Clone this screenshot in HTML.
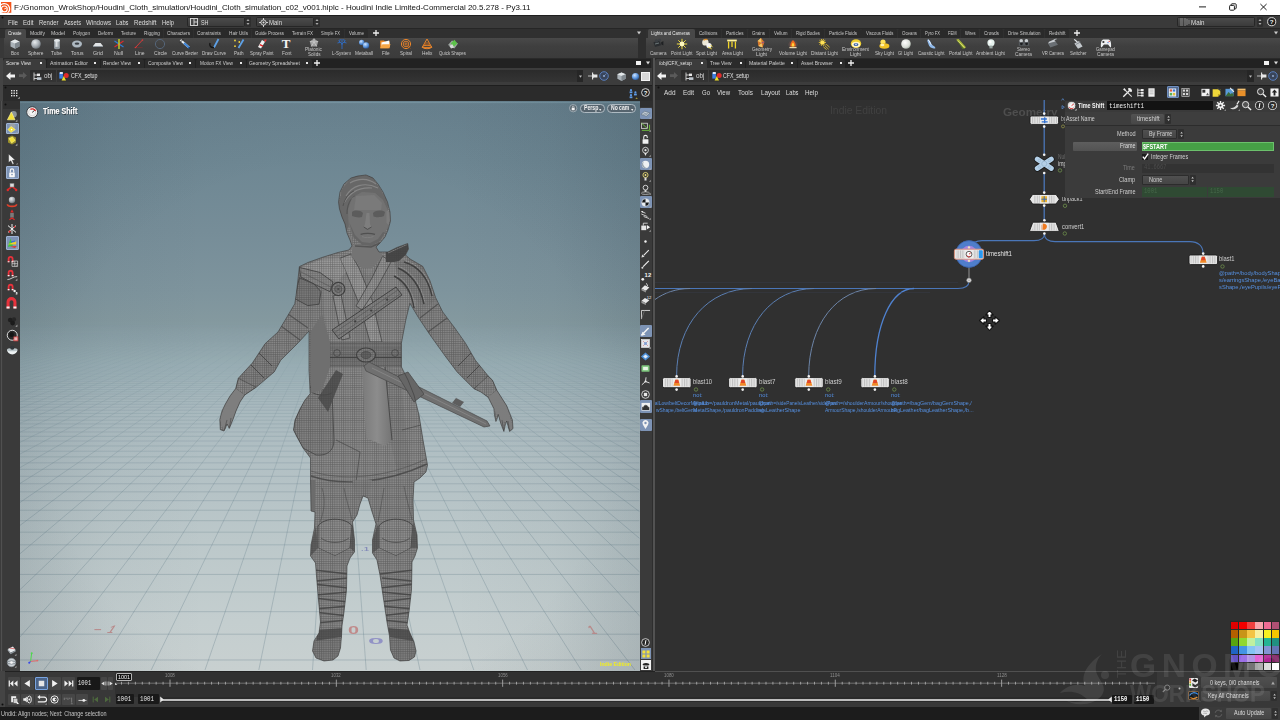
<!DOCTYPE html>
<html lang="en"><head><meta charset="utf-8"><title>Houdini</title><style>
*{box-sizing:border-box;margin:0;padding:0}
html,body{width:1280px;height:720px;overflow:hidden;background:#3a3a3a}
body{position:relative;font-family:"Liberation Sans",sans-serif;color:#d6d6d6;font-size:8px;line-height:1}
.a{position:absolute}
.t{position:absolute;white-space:nowrap;line-height:1}
.c{position:absolute;white-space:nowrap;line-height:1;transform:translateX(-50%);text-align:center}
svg{position:absolute;overflow:visible}
</style></head><body>
<div class="a" style="left:0px;top:0px;width:1280px;height:15px;background:#ffffff;"></div>
<svg style="left:0;top:0" width="13" height="15" viewBox="0 0 13 15"><defs><clipPath id="clogo"><rect x="1" y="2" width="10.3" height="10.8"/></clipPath></defs><rect x="1" y="2" width="10.3" height="10.8" fill="#f2541a"/><g clip-path="url(#clogo)" fill="none" stroke="#fff"><circle cx="4.3" cy="8.9" r="5.3" stroke-width="1.3"/><circle cx="4.3" cy="8.9" r="2.9" stroke-width="1.2"/><path d="M4.3 8.9L6 8.2" stroke-width="0.9"/><path d="M-2 15L3 10.5" stroke-width="2.4"/></g></svg>
<div class="t" style="left:13.6px;top:4px;font-size:8px;color:#101010;transform:scaleX(0.9982);transform-origin:0 0;">F:/Gnomon_WrokShop/Houdini_Cloth_simulation/Houdini_Cloth_simulation_c02_v001.hiplc - Houdini Indie Limited-Commercial 20.5.278 - Py3.11</div>
<svg style="left:1195px;top:0" width="85" height="15" viewBox="0 0 85 15"><path d="M4 6.9h7" stroke="#1e1e1e" stroke-width="1"/><rect x="34.6" y="5.4" width="4.8" height="4.8" rx="0.8" fill="none" stroke="#1e1e1e" stroke-width="1"/><path d="M36.2 5.2v-0.6a0.8 0.8 0 0 1 0.8 -0.8h3.4a0.8 0.8 0 0 1 0.8 0.8v3.4a0.8 0.8 0 0 1 -0.8 0.8h-0.8" fill="none" stroke="#1e1e1e" stroke-width="1"/><path d="M65.4 4l6.2 6M71.6 4l-6.2 6" stroke="#1e1e1e" stroke-width="1"/></svg>
<div class="a" style="left:0px;top:15px;width:1280px;height:14px;background:#3a3a3a;"></div>
<div class="a" style="left:0px;top:15px;width:1280px;height:1px;background:#1f1f1f;"></div>
<div class="a" style="left:0px;top:16px;width:4px;height:42px;background:#383838;"></div>
<svg style="left:0.6px;top:16.4px" width="3" height="18"><circle cx="1.5" cy="1.5" r="1" fill="#0e0e0e"/><circle cx="1.5" cy="14.4" r="1" fill="#0e0e0e"/></svg>
<div class="t" style="left:8px;top:18.6px;font-size:7.0px;color:#dedede;transform:scaleX(0.8865);transform-origin:0 0;">File</div>
<div class="t" style="left:23px;top:18.6px;font-size:7.0px;color:#dedede;transform:scaleX(0.8705);transform-origin:0 0;">Edit</div>
<div class="t" style="left:39px;top:18.6px;font-size:7.0px;color:#dedede;transform:scaleX(0.8493);transform-origin:0 0;">Render</div>
<div class="t" style="left:64px;top:18.6px;font-size:7.0px;color:#dedede;transform:scaleX(0.8092);transform-origin:0 0;">Assets</div>
<div class="t" style="left:86px;top:18.6px;font-size:7.0px;color:#dedede;transform:scaleX(0.8804);transform-origin:0 0;">Windows</div>
<div class="t" style="left:116px;top:18.6px;font-size:7.0px;color:#dedede;transform:scaleX(0.8235);transform-origin:0 0;">Labs</div>
<div class="t" style="left:134px;top:18.6px;font-size:7.0px;color:#dedede;transform:scaleX(0.8762);transform-origin:0 0;">Redshift</div>
<div class="t" style="left:162px;top:18.6px;font-size:7.0px;color:#dedede;transform:scaleX(0.8335);transform-origin:0 0;">Help</div>
<div class="a" style="left:187px;top:17px;width:57.5px;height:10.4px;background:linear-gradient(#4b4b4b,#3b3b3b);border-radius:1.5px;border:0.6px solid #262626"></div>
<div class="a" style="left:245px;top:17px;width:6px;height:10.4px;background:#2e2e2e;border-radius:1px"></div>
<svg style="left:190px;top:18px" width="8" height="8" viewBox="0 0 8 8"><rect x="0.5" y="0.5" width="7" height="7" fill="none" stroke="#ddd" stroke-width="0.9"/><path d="M4 0.5v7M4 4h3.5" stroke="#ddd" stroke-width="0.9"/></svg>
<div class="t" style="left:200.5px;top:18.6px;font-size:7.0px;color:#dedede;transform:scaleX(0.7712);transform-origin:0 0;">SH</div>
<svg style="left:246.2px;top:18.2px" width="4" height="8" viewBox="0 0 4 8"><path d="M0.5 3L2 1L3.5 3zM0.5 5L2 7L3.5 5z" fill="#aaa"/></svg>
<div class="a" style="left:256px;top:17px;width:57.5px;height:10.4px;background:linear-gradient(#4b4b4b,#3b3b3b);border-radius:1.5px;border:0.6px solid #262626"></div>
<div class="a" style="left:314px;top:17px;width:6px;height:10.4px;background:#2e2e2e;border-radius:1px"></div>
<svg style="left:258.5px;top:17.5px" width="9" height="9" viewBox="0 0 9 9"><circle cx="4.5" cy="4.5" r="2.6" fill="none" stroke="#ddd" stroke-width="0.9"/><circle cx="4.5" cy="4.5" r="1" fill="#ddd"/><path d="M4.5 0v2M4.5 7v2M0 4.5h2M7 4.5h2" stroke="#ddd" stroke-width="0.9"/></svg>
<div class="t" style="left:269px;top:18.6px;font-size:7.0px;color:#dedede;transform:scaleX(0.8568);transform-origin:0 0;">Main</div>
<svg style="left:315.2px;top:18.2px" width="4" height="8" viewBox="0 0 4 8"><path d="M0.5 3L2 1L3.5 3zM0.5 5L2 7L3.5 5z" fill="#aaa"/></svg>
<div class="a" style="left:1177px;top:17px;width:78px;height:10.4px;background:linear-gradient(#4b4b4b,#3b3b3b);border-radius:1.5px;border:0.6px solid #262626"></div>
<div class="a" style="left:1256.5px;top:17px;width:6px;height:10.4px;background:#2e2e2e;border-radius:1px"></div>
<svg style="left:1179.5px;top:18px" width="10" height="8" viewBox="0 0 10 8"><path d="M0 1h3M0 3h3M0 5h3M0 7h3M5 0v8M7 1v6M9 2v4" stroke="#999" stroke-width="0.8"/></svg>
<div class="t" style="left:1191px;top:18.6px;font-size:7.0px;color:#dedede;transform:scaleX(0.8897);transform-origin:0 0;">Main</div>
<svg style="left:1258px;top:18px" width="4" height="8" viewBox="0 0 4 8"><path d="M0.5 3L2 1L3.5 3zM0.5 5L2 7L3.5 5z" fill="#aaa"/></svg>
<svg style="left:1267px;top:17.2px" width="9.4" height="9.4" viewBox="0 0 9 9"><circle cx="4.5" cy="4.5" r="3.9" fill="#1e1e1e" stroke="#e4e4e4" stroke-width="0.9"/><text x="4.5" y="6.7" font-size="6" font-weight="bold" text-anchor="middle" fill="#fff" font-family="Liberation Sans,sans-serif">?</text></svg>
<div class="a" style="left:0px;top:29px;width:1280px;height:9px;background:#303030;"></div>
<div class="a" style="left:0px;top:28px;width:1280px;height:1px;background:#262626;"></div>
<div class="a" style="left:5px;top:29px;width:20.75px;height:9px;background:#484848;border-radius:2px 2px 0 0"></div>
<div class="t" style="left:8px;top:31.2px;font-size:5.3px;color:#ececec;transform:scaleX(0.8486);transform-origin:0 0;">Create</div>
<div class="a" style="left:26.15px;top:29.4px;width:21.45px;height:8.6px;background:#2a2a2a;border-radius:1.5px 1.5px 0 0"></div>
<div class="t" style="left:30px;top:31.2px;font-size:5.3px;color:#c8c8c8;transform:scaleX(0.9609);transform-origin:0 0;">Modify</div>
<div class="a" style="left:48.4px;top:29.4px;width:20.2px;height:8.6px;background:#2a2a2a;border-radius:1.5px 1.5px 0 0"></div>
<div class="t" style="left:51px;top:31.2px;font-size:5.3px;color:#c8c8c8;transform:scaleX(0.9698);transform-origin:0 0;">Model</div>
<div class="a" style="left:69.4px;top:29.4px;width:24.2px;height:8.6px;background:#2a2a2a;border-radius:1.5px 1.5px 0 0"></div>
<div class="t" style="left:73px;top:31.2px;font-size:5.3px;color:#c8c8c8;transform:scaleX(0.8876);transform-origin:0 0;">Polygon</div>
<div class="a" style="left:94.4px;top:29.4px;width:22.2px;height:8.6px;background:#2a2a2a;border-radius:1.5px 1.5px 0 0"></div>
<div class="t" style="left:98px;top:31.2px;font-size:5.3px;color:#c8c8c8;transform:scaleX(0.8633);transform-origin:0 0;">Deform</div>
<div class="a" style="left:117.4px;top:29.4px;width:22.2px;height:8.6px;background:#2a2a2a;border-radius:1.5px 1.5px 0 0"></div>
<div class="t" style="left:121px;top:31.2px;font-size:5.3px;color:#c8c8c8;transform:scaleX(0.8630);transform-origin:0 0;">Texture</div>
<div class="a" style="left:140.4px;top:29.4px;width:22.7px;height:8.6px;background:#2a2a2a;border-radius:1.5px 1.5px 0 0"></div>
<div class="t" style="left:144px;top:31.2px;font-size:5.3px;color:#c8c8c8;transform:scaleX(0.8902);transform-origin:0 0;">Rigging</div>
<div class="a" style="left:163.9px;top:29.4px;width:29.2px;height:8.6px;background:#2a2a2a;border-radius:1.5px 1.5px 0 0"></div>
<div class="t" style="left:167px;top:31.2px;font-size:5.3px;color:#c8c8c8;transform:scaleX(0.8873);transform-origin:0 0;">Characters</div>
<div class="a" style="left:193.9px;top:29.4px;width:30.7px;height:8.6px;background:#2a2a2a;border-radius:1.5px 1.5px 0 0"></div>
<div class="t" style="left:197px;top:31.2px;font-size:5.3px;color:#c8c8c8;transform:scaleX(0.8953);transform-origin:0 0;">Constraints</div>
<div class="a" style="left:225.4px;top:29.4px;width:25.7px;height:8.6px;background:#2a2a2a;border-radius:1.5px 1.5px 0 0"></div>
<div class="t" style="left:229px;top:31.2px;font-size:5.3px;color:#c8c8c8;transform:scaleX(0.8839);transform-origin:0 0;">Hair Utils</div>
<div class="a" style="left:251.9px;top:29.4px;width:35.7px;height:8.6px;background:#2a2a2a;border-radius:1.5px 1.5px 0 0"></div>
<div class="t" style="left:255px;top:31.2px;font-size:5.3px;color:#c8c8c8;transform:scaleX(0.8343);transform-origin:0 0;">Guide Process</div>
<div class="a" style="left:288.4px;top:29.4px;width:28.2px;height:8.6px;background:#2a2a2a;border-radius:1.5px 1.5px 0 0"></div>
<div class="t" style="left:292px;top:31.2px;font-size:5.3px;color:#c8c8c8;transform:scaleX(0.8590);transform-origin:0 0;">Terrain FX</div>
<div class="a" style="left:317.4px;top:29.4px;width:26.7px;height:8.6px;background:#2a2a2a;border-radius:1.5px 1.5px 0 0"></div>
<div class="t" style="left:321px;top:31.2px;font-size:5.3px;color:#c8c8c8;transform:scaleX(0.7772);transform-origin:0 0;">Simple FX</div>
<div class="a" style="left:344.9px;top:29.4px;width:23.2px;height:8.6px;background:#2a2a2a;border-radius:1.5px 1.5px 0 0"></div>
<div class="t" style="left:349px;top:31.2px;font-size:5.3px;color:#c8c8c8;transform:scaleX(0.8485);transform-origin:0 0;">Volume</div>
<svg style="left:372.5px;top:30px" width="6" height="6" viewBox="0 0 6 6"><path d="M3 0v6M0 3h6" stroke="#eee" stroke-width="1.3"/></svg>
<div class="a" style="left:648px;top:29px;width:46.5px;height:9px;background:#484848;border-radius:2px 2px 0 0"></div>
<div class="t" style="left:651px;top:31.2px;font-size:5.3px;color:#ececec;transform:scaleX(0.8222);transform-origin:0 0;">Lights and Cameras</div>
<div class="a" style="left:694.9px;top:29.4px;width:26.45px;height:8.6px;background:#2a2a2a;border-radius:1.5px 1.5px 0 0"></div>
<div class="t" style="left:699px;top:31.2px;font-size:5.3px;color:#c8c8c8;transform:scaleX(0.8157);transform-origin:0 0;">Collisions</div>
<div class="a" style="left:722.15px;top:29.4px;width:25.2px;height:8.6px;background:#2a2a2a;border-radius:1.5px 1.5px 0 0"></div>
<div class="t" style="left:726px;top:31.2px;font-size:5.3px;color:#c8c8c8;transform:scaleX(0.8611);transform-origin:0 0;">Particles</div>
<div class="a" style="left:748.15px;top:29.4px;width:20.7px;height:8.6px;background:#2a2a2a;border-radius:1.5px 1.5px 0 0"></div>
<div class="t" style="left:752px;top:31.2px;font-size:5.3px;color:#c8c8c8;transform:scaleX(0.8328);transform-origin:0 0;">Grains</div>
<div class="a" style="left:769.65px;top:29.4px;width:21.45px;height:8.6px;background:#2a2a2a;border-radius:1.5px 1.5px 0 0"></div>
<div class="t" style="left:773.5px;top:31.2px;font-size:5.3px;color:#c8c8c8;transform:scaleX(0.8486);transform-origin:0 0;">Vellum</div>
<div class="a" style="left:791.9px;top:29.4px;width:31.95px;height:8.6px;background:#2a2a2a;border-radius:1.5px 1.5px 0 0"></div>
<div class="t" style="left:796px;top:31.2px;font-size:5.3px;color:#c8c8c8;transform:scaleX(0.8065);transform-origin:0 0;">Rigid Bodies</div>
<div class="a" style="left:824.65px;top:29.4px;width:35.95px;height:8.6px;background:#2a2a2a;border-radius:1.5px 1.5px 0 0"></div>
<div class="t" style="left:828.5px;top:31.2px;font-size:5.3px;color:#c8c8c8;transform:scaleX(0.8412);transform-origin:0 0;">Particle Fluids</div>
<div class="a" style="left:861.4px;top:29.4px;width:35.45px;height:8.6px;background:#2a2a2a;border-radius:1.5px 1.5px 0 0"></div>
<div class="t" style="left:865.5px;top:31.2px;font-size:5.3px;color:#c8c8c8;transform:scaleX(0.8071);transform-origin:0 0;">Viscous Fluids</div>
<div class="a" style="left:897.65px;top:29.4px;width:22.7px;height:8.6px;background:#2a2a2a;border-radius:1.5px 1.5px 0 0"></div>
<div class="t" style="left:901.5px;top:31.2px;font-size:5.3px;color:#c8c8c8;transform:scaleX(0.8212);transform-origin:0 0;">Oceans</div>
<div class="a" style="left:921.15px;top:29.4px;width:22.45px;height:8.6px;background:#2a2a2a;border-radius:1.5px 1.5px 0 0"></div>
<div class="t" style="left:925px;top:31.2px;font-size:5.3px;color:#c8c8c8;transform:scaleX(0.7836);transform-origin:0 0;">Pyro FX</div>
<div class="a" style="left:944.4px;top:29.4px;width:15.95px;height:8.6px;background:#2a2a2a;border-radius:1.5px 1.5px 0 0"></div>
<div class="t" style="left:948px;top:31.2px;font-size:5.3px;color:#c8c8c8;transform:scaleX(0.7597);transform-origin:0 0;">FEM</div>
<div class="a" style="left:961.15px;top:29.4px;width:18.2px;height:8.6px;background:#2a2a2a;border-radius:1.5px 1.5px 0 0"></div>
<div class="t" style="left:965px;top:31.2px;font-size:5.3px;color:#c8c8c8;transform:scaleX(0.7753);transform-origin:0 0;">Wires</div>
<div class="a" style="left:980.15px;top:29.4px;width:22.7px;height:8.6px;background:#2a2a2a;border-radius:1.5px 1.5px 0 0"></div>
<div class="t" style="left:984px;top:31.2px;font-size:5.3px;color:#c8c8c8;transform:scaleX(0.8349);transform-origin:0 0;">Crowds</div>
<div class="a" style="left:1003.65px;top:29.4px;width:40.2px;height:8.6px;background:#2a2a2a;border-radius:1.5px 1.5px 0 0"></div>
<div class="t" style="left:1007.5px;top:31.2px;font-size:5.3px;color:#c8c8c8;transform:scaleX(0.8423);transform-origin:0 0;">Drive Simulation</div>
<div class="a" style="left:1044.65px;top:29.4px;width:24.45px;height:8.6px;background:#2a2a2a;border-radius:1.5px 1.5px 0 0"></div>
<div class="t" style="left:1048.5px;top:31.2px;font-size:5.3px;color:#c8c8c8;transform:scaleX(0.8486);transform-origin:0 0;">Redshift</div>
<svg style="left:1073.5px;top:30px" width="6" height="6" viewBox="0 0 6 6"><path d="M3 0v6M0 3h6" stroke="#eee" stroke-width="1.3"/></svg>
<div class="a" style="left:638px;top:29px;width:8px;height:42px;background:#2e2e2e;"></div>
<svg style="left:637px;top:31px" width="4" height="4" viewBox="0 0 4 4"><path d="M0 0.5h4L2 3.5z" fill="#ccc"/></svg>
<svg style="left:1274px;top:31px" width="4" height="4" viewBox="0 0 4 4"><path d="M0 0.5h4L2 3.5z" fill="#ccc"/></svg>
<div class="a" style="left:4px;top:38px;width:634px;height:19.5px;background:linear-gradient(#494949,#3f3f3f 40%,#3b3b3b);"></div>
<div class="a" style="left:646px;top:38px;width:634px;height:19.5px;background:linear-gradient(#494949,#3f3f3f 40%,#3b3b3b);"></div>
<svg width="0" height="0" style="left:0;top:0"><defs><radialGradient id="gsph" cx="0.38" cy="0.32" r="0.7"><stop offset="0" stop-color="#e8ecef"/><stop offset="0.6" stop-color="#a6adb3"/><stop offset="1" stop-color="#6d747a"/></radialGradient><radialGradient id="gblu" cx="0.38" cy="0.32" r="0.7"><stop offset="0" stop-color="#cfe4ff"/><stop offset="0.6" stop-color="#5f97dc"/><stop offset="1" stop-color="#2d5a9c"/></radialGradient><radialGradient id="gwht" cx="0.4" cy="0.35" r="0.7"><stop offset="0" stop-color="#ffffff"/><stop offset="0.7" stop-color="#d8ddd6"/><stop offset="1" stop-color="#9aa39a"/></radialGradient><linearGradient id="gcyl" x1="0" x2="1"><stop offset="0" stop-color="#7d858b"/><stop offset="0.4" stop-color="#dfe3e6"/><stop offset="1" stop-color="#7d858b"/></linearGradient></defs></svg>
<svg style="left:9.0px;top:38.0px" width="12" height="12" viewBox="-6 -6 12 12"><path d="M-4.5 -2.5L0 -4.5L4.5 -2.5V2.5L0 4.8L-4.5 2.5z" fill="#aab2b8"/><path d="M-4.5 -2.5L0 -4.5L4.5 -2.5L0 -0.6z" fill="#e4e8ea"/><path d="M0 -0.6L4.5 -2.5V2.5L0 4.8z" fill="#80888e"/></svg>
<div class="t" style="left:11px;top:50.9px;font-size:5.2px;color:#c9c9c9;transform:scaleX(0.8928);transform-origin:0 0;">Box</div>
<svg style="left:29.5px;top:38.0px" width="12" height="12" viewBox="-6 -6 12 12"><circle r="4.8" fill="url(#gsph)"/></svg>
<div class="t" style="left:28px;top:50.9px;font-size:5.2px;color:#c9c9c9;transform:scaleX(0.9243);transform-origin:0 0;">Sphere</div>
<svg style="left:50.5px;top:38.0px" width="12" height="12" viewBox="-6 -6 12 12"><rect x="-3" y="-3.6" width="6" height="7.6" fill="url(#gcyl)"/><ellipse cy="4" rx="3" ry="1.2" fill="#8e969c"/><ellipse cy="-3.6" rx="3" ry="1.3" fill="#e3e7ea"/></svg>
<div class="t" style="left:51px;top:50.9px;font-size:5.2px;color:#c9c9c9;transform:scaleX(0.9434);transform-origin:0 0;">Tube</div>
<svg style="left:71.0px;top:38.0px" width="12" height="12" viewBox="-6 -6 12 12"><ellipse rx="5" ry="3.4" fill="#aeb9c2"/><ellipse cy="-0.3" rx="2.3" ry="1.1" fill="#3a3f44"/><path d="M-5 0.4A5 3.2 0 0 0 5 0.4A5 3.6 0 0 1 -5 0.4z" fill="#6e7a85"/></svg>
<div class="t" style="left:71px;top:50.9px;font-size:5.2px;color:#c9c9c9;transform:scaleX(0.9830);transform-origin:0 0;">Torus</div>
<svg style="left:92.0px;top:38.0px" width="12" height="12" viewBox="-6 -6 12 12"><path d="M-2.6 -1L2.6 -1L5 2L-5 2z" fill="#e1e4e6"/><path d="M-5 2H5V3H-5z" fill="#8b9298"/></svg>
<div class="t" style="left:93px;top:50.9px;font-size:5.2px;color:#c9c9c9;transform:scaleX(1.0179);transform-origin:0 0;">Grid</div>
<svg style="left:112.5px;top:38.0px" width="12" height="12" viewBox="-6 -6 12 12"><path d="M-4.5 -3L4.5 3" stroke="#2e7fd6" stroke-width="1.2"/><path d="M-4.5 3L4.5 -3" stroke="#e02b2b" stroke-width="1.2"/><path d="M0 -5V5" stroke="#c8d628" stroke-width="1.4"/></svg>
<div class="t" style="left:114px;top:50.9px;font-size:5.2px;color:#c9c9c9;transform:scaleX(1.0047);transform-origin:0 0;">Null</div>
<svg style="left:133.0px;top:38.0px" width="12" height="12" viewBox="-6 -6 12 12"><path d="M-3.5 3.5L3.5 -4" stroke="#d83a3a" stroke-width="1"/><path d="M-4.5 3.6H3.5" stroke="#8a3030" stroke-width="0.6"/><circle cx="-3.5" cy="3.5" r="0.8" fill="#d83a3a"/><circle cx="3.5" cy="-4" r="0.8" fill="#d83a3a"/></svg>
<div class="t" style="left:134.5px;top:50.9px;font-size:5.2px;color:#c9c9c9;transform:scaleX(0.9663);transform-origin:0 0;">Line</div>
<svg style="left:154.0px;top:38.0px" width="12" height="12" viewBox="-6 -6 12 12"><circle r="4.6" fill="none" stroke="#556579" stroke-width="1"/></svg>
<div class="t" style="left:153.5px;top:50.9px;font-size:5.2px;color:#c9c9c9;transform:scaleX(0.9782);transform-origin:0 0;">Circle</div>
<svg style="left:179.0px;top:38.0px" width="12" height="12" viewBox="-6 -6 12 12"><path d="M-4.5 -4L4 3.5" stroke="#e9eef3" stroke-width="2.2"/><path d="M-1 -1L4.2 3.8" stroke="#3f86d8" stroke-width="2"/><path d="M-5 -1.5L-1.5 -5" stroke="#222" stroke-width="0.8"/><circle cx="4.3" cy="3.9" r="0.9" fill="#1c3f6e"/></svg>
<div class="t" style="left:172px;top:50.9px;font-size:5.2px;color:#c9c9c9;transform:scaleX(0.8651);transform-origin:0 0;">Curve Bezier</div>
<svg style="left:207.5px;top:38.0px" width="12" height="12" viewBox="-6 -6 12 12"><path d="M4.5 -5L0 3.5" stroke="#5da0e6" stroke-width="1.8"/><path d="M-4 -1C-5 2 -3 4 0 3.5" stroke="#151515" stroke-width="1.4" fill="none"/></svg>
<div class="t" style="left:201.5px;top:50.9px;font-size:5.2px;color:#c9c9c9;transform:scaleX(0.8743);transform-origin:0 0;">Draw Curve</div>
<svg style="left:232.5px;top:38.0px" width="12" height="12" viewBox="-6 -6 12 12"><path d="M4.5 -4.5L-0.5 4" stroke="#5da0e6" stroke-width="1.8"/><circle cx="-4" cy="-3.5" r="0.9" fill="#f2d53a"/><circle cx="0.3" cy="-2" r="0.9" fill="#f2d53a"/><circle cx="-4" cy="2.2" r="0.9" fill="#f2d53a"/></svg>
<div class="t" style="left:234px;top:50.9px;font-size:5.2px;color:#c9c9c9;transform:scaleX(0.8881);transform-origin:0 0;">Path</div>
<svg style="left:255.5px;top:38.0px" width="12" height="12" viewBox="-6 -6 12 12"><path d="M-4 3L0 -4L3 -2.3L-1 4.6z" fill="#f1f1f1"/><path d="M-2.2 0.6L1 2.2" stroke="#d22" stroke-width="1.4"/><path d="M1.5 -4.2L4.8 -4.6L3.6 -1.8z" fill="#e03a3a"/></svg>
<div class="t" style="left:250px;top:50.9px;font-size:5.2px;color:#c9c9c9;transform:scaleX(0.8742);transform-origin:0 0;">Spray Paint</div>
<svg style="left:280.0px;top:38.0px" width="12" height="12" viewBox="-6 -6 12 12"><text x="0" y="4.4" text-anchor="middle" font-family="Liberation Serif,serif" font-weight="bold" font-size="13" fill="#f4f4f4">T</text></svg>
<div class="t" style="left:281.5px;top:50.9px;font-size:5.2px;color:#c9c9c9;transform:scaleX(0.9130);transform-origin:0 0;">Font</div>
<svg style="left:307.5px;top:36.5px" width="12" height="12" viewBox="-6 -6 12 12"><path d="M0 -4.6L4.2 -1.6L2.8 3.6H-2.8L-4.2 -1.6z" fill="#a0a0a0"/><path d="M0 -4.6L0 -1L-4.2 -1.6M0 -1L4.2 -1.6M0 -1L-2.8 3.6M0 -1L2.8 3.6" stroke="#d6d6d6" stroke-width="0.6" fill="none"/></svg>
<div class="t" style="left:305px;top:47.2px;font-size:5.2px;color:#c9c9c9;transform:scaleX(0.9189);transform-origin:0 0;">Platonic</div>
<div class="t" style="left:307.5px;top:52.2px;font-size:5.2px;color:#c9c9c9;transform:scaleX(0.8826);transform-origin:0 0;">Solids</div>
<svg style="left:335.5px;top:38.0px" width="12" height="12" viewBox="-6 -6 12 12"><path d="M0 5V0M0 0L-3.5 -3.5M0 0L3.5 -3.5M0 1L0 -5M-1.8 -1.8L-4.5 -1M1.8 -1.8L4.5 -1M-2.6 -2.6L-1.6 -5M2.6 -2.6L1.6 -5" stroke="#2f6cc4" stroke-width="0.9" fill="none"/></svg>
<div class="t" style="left:332px;top:50.9px;font-size:5.2px;color:#c9c9c9;transform:scaleX(0.8652);transform-origin:0 0;">L-System</div>
<svg style="left:358.0px;top:38.0px" width="12" height="12" viewBox="-6 -6 12 12"><circle cx="-2.3" cy="-1.6" r="2.7" fill="url(#gblu)"/><circle cx="2" cy="1.4" r="3.2" fill="url(#gblu)"/></svg>
<div class="t" style="left:355px;top:50.9px;font-size:5.2px;color:#c9c9c9;transform:scaleX(0.9158);transform-origin:0 0;">Metaball</div>
<svg style="left:379.0px;top:38.0px" width="12" height="12" viewBox="-6 -6 12 12"><path d="M-4.8 -3.6H-1L0 -2.4H4.8V4.2H-4.8z" fill="#f08a24"/><path d="M-3.6 -1.6L4.2 -3.4L4.6 2.6L-3.2 3.4z" fill="#fbfbfb"/><path d="M-4.8 4.2L-2.6 0.2H5.6L3.6 4.2z" fill="#f6a646"/></svg>
<div class="t" style="left:381.5px;top:50.9px;font-size:5.2px;color:#c9c9c9;transform:scaleX(0.8951);transform-origin:0 0;">File</div>
<svg style="left:400.0px;top:38.0px" width="12" height="12" viewBox="-6 -6 12 12"><circle r="4.6" fill="none" stroke="#e8852c" stroke-width="1"/><circle r="2.8" fill="none" stroke="#e8852c" stroke-width="0.9"/><circle r="1.1" fill="none" stroke="#e8852c" stroke-width="0.8"/><path d="M0 0L4.5 4.5" stroke="#a7551a" stroke-width="0.8"/></svg>
<div class="t" style="left:400px;top:50.9px;font-size:5.2px;color:#c9c9c9;transform:scaleX(0.9026);transform-origin:0 0;">Spiral</div>
<svg style="left:420.5px;top:38.0px" width="12" height="12" viewBox="-6 -6 12 12"><path d="M0 -5L4.8 3.4H-4.8z" fill="none" stroke="#e8852c" stroke-width="1"/><ellipse cy="3" rx="4.6" ry="1.7" fill="none" stroke="#e8852c" stroke-width="1"/><ellipse cy="0" rx="2.7" ry="1.1" fill="none" stroke="#c96c1e" stroke-width="0.9"/></svg>
<div class="t" style="left:421.5px;top:50.9px;font-size:5.2px;color:#c9c9c9;transform:scaleX(0.9084);transform-origin:0 0;">Helix</div>
<svg style="left:446.5px;top:38.0px" width="12" height="12" viewBox="-6 -6 12 12"><path d="M-5 1L-1 -3.6L5 -0.6L1.4 4.4z" fill="#9ea6a2"/><path d="M-2.4 -0.6L1.4 -4.2L4.4 -0.6L1 2.4z" fill="#5cc24a"/><path d="M-3.6 2L-0.6 0.2L1 3.4L-2 4.4z" fill="#d6dad8"/></svg>
<div class="t" style="left:439px;top:50.9px;font-size:5.2px;color:#c9c9c9;transform:scaleX(0.8340);transform-origin:0 0;">Quick Shapes</div>
<svg style="left:651.5px;top:38.0px" width="12" height="12" viewBox="-6 -6 12 12"><path d="M-4.6 -1.8L1.6 -3.4L3.2 1.2L-3 3z" fill="#2a2d30"/><circle cx="-1.6" cy="-3" r="1.7" fill="#3b3f43"/><circle cx="1.6" cy="-3.8" r="1.4" fill="#3b3f43"/><path d="M3 -1.6L5.4 -3V1.4L3.4 0.6z" fill="#1f2123"/><path d="M-3 0L1 -1" stroke="#9aa" stroke-width="0.6"/></svg>
<div class="t" style="left:649.5px;top:50.9px;font-size:5.2px;color:#c9c9c9;transform:scaleX(0.8921);transform-origin:0 0;">Camera</div>
<svg style="left:675.5px;top:38.0px" width="12" height="12" viewBox="-6 -6 12 12"><path d="M2.00 0.00L5.20 0.00M1.41 1.41L3.68 3.68M0.00 2.00L0.00 5.20M-1.41 1.41L-3.68 3.68M-2.00 0.00L-5.20 0.00M-1.41 -1.41L-3.68 -3.68M-0.00 -2.00L-0.00 -5.20M1.41 -1.41L3.68 -3.68" stroke="#f0dc3c" stroke-width="1"/><circle r="2.4" fill="#fff8c0"/></svg>
<div class="t" style="left:671px;top:50.9px;font-size:5.2px;color:#c9c9c9;transform:scaleX(0.8749);transform-origin:0 0;">Point Light</div>
<svg style="left:700.5px;top:38.0px" width="12" height="12" viewBox="-6 -6 12 12"><circle cx="-1.6" cy="-1.6" r="3.2" fill="#ece8d8"/><path d="M-3.4 -3.6A3.4 3.4 0 0 1 0.4 -4.4" stroke="#e0902a" stroke-width="1.2" fill="none"/><circle cx="2" cy="1.6" r="2.6" fill="#f6f6f6"/><path d="M1 3L4.8 5M3.4 0.8L5.6 3.2" stroke="#f0d83a" stroke-width="0.9"/></svg>
<div class="t" style="left:696px;top:50.9px;font-size:5.2px;color:#c9c9c9;transform:scaleX(0.8967);transform-origin:0 0;">Spot Light</div>
<svg style="left:726.0px;top:38.0px" width="12" height="12" viewBox="-6 -6 12 12"><path d="M-4.8 -4.4H4.8V-2.6H-4.8z" fill="#fff2a0"/><path d="M-3.4 -2.6V4.4M0 -2.6V3M3.4 -2.6V4.4" stroke="#f0d428" stroke-width="1.3"/></svg>
<div class="t" style="left:721.5px;top:50.9px;font-size:5.2px;color:#c9c9c9;transform:scaleX(0.8859);transform-origin:0 0;">Area Light</div>
<svg style="left:755.0px;top:36.5px" width="12" height="12" viewBox="-6 -6 12 12"><path d="M0 -5L3.4 -1L1.6 4.6L-2.6 3L-3.4 -2z" fill="#d8782a"/><path d="M0 -5L0.6 0L-3.4 -2zM0.6 0L1.6 4.6L-2.6 3z" fill="#f0c86a"/><path d="M0.6 0L3.4 -1" stroke="#7b3fa0" stroke-width="0.8"/></svg>
<div class="t" style="left:751.5px;top:47.2px;font-size:5.2px;color:#c9c9c9;transform:scaleX(0.8761);transform-origin:0 0;">Geometry</div>
<div class="t" style="left:755.5px;top:52.2px;font-size:5.2px;color:#c9c9c9;transform:scaleX(0.9755);transform-origin:0 0;">Light</div>
<svg style="left:787.0px;top:38.0px" width="12" height="12" viewBox="-6 -6 12 12"><ellipse cy="0.4" rx="4.6" ry="4.2" fill="#5a4a48"/><path d="M0 -4C2.4 -1.4 3 0.6 2.6 2.6H-2.6C-3 0.6 -2.4 -1.4 0 -4z" fill="#f06a1e"/><path d="M0 -1.4C1.2 0 1.4 1.4 1.2 2.6H-1.2C-1.4 1.4 -1.2 0 0 -1.4z" fill="#ffd23c"/><path d="M-3.6 3H3.6V4.2H-3.6z" fill="#e9d9b0"/></svg>
<div class="t" style="left:779px;top:50.9px;font-size:5.2px;color:#c9c9c9;transform:scaleX(0.9313);transform-origin:0 0;">Volume Light</div>
<svg style="left:818.0px;top:38.0px" width="12" height="12" viewBox="-6 -6 12 12"><g transform="translate(-1.6,-1.6)"><path d="M1.60 0.00L3.60 0.00M1.29 0.94L2.91 2.12M0.49 1.52L1.11 3.42M-0.49 1.52L-1.11 3.42M-1.29 0.94L-2.91 2.12M-1.60 0.00L-3.60 0.00M-1.29 -0.94L-2.91 -2.12M-0.49 -1.52L-1.11 -3.42M0.49 -1.52L1.11 -3.42M1.29 -0.94L2.91 -2.12" stroke="#f0cc30" stroke-width="0.9"/><circle r="2" fill="#ffe45a"/></g><path d="M0.6 1.4L4.6 5.2M2.2 0.2L5.6 3.2M-0.6 2.8L2.6 5.6" stroke="#f0cc30" stroke-width="0.8"/></svg>
<div class="t" style="left:810.5px;top:50.9px;font-size:5.2px;color:#c9c9c9;transform:scaleX(0.9341);transform-origin:0 0;">Distant Light</div>
<svg style="left:849.5px;top:36.5px" width="12" height="12" viewBox="-6 -6 12 12"><ellipse cy="0.6" rx="5.2" ry="4.4" fill="#f0d030"/><ellipse cy="1.6" rx="4.2" ry="2.8" fill="#fff6c8"/><ellipse cy="1.4" rx="2.4" ry="1.5" fill="#3a62a8"/><circle cy="1.4" r="0.8" fill="#e8f0ff"/></svg>
<div class="t" style="left:842px;top:47.2px;font-size:5.2px;color:#c9c9c9;transform:scaleX(0.9249);transform-origin:0 0;">Environment</div>
<div class="t" style="left:850px;top:52.2px;font-size:5.2px;color:#c9c9c9;transform:scaleX(0.9755);transform-origin:0 0;">Light</div>
<svg style="left:878.0px;top:38.0px" width="12" height="12" viewBox="-6 -6 12 12"><circle cx="-1" cy="-2" r="2.6" fill="#ffe25a"/><ellipse cx="0.4" cy="2" rx="5" ry="2.8" fill="#f0c226"/><ellipse cx="-1.6" cy="1" rx="2" ry="1.2" fill="#fff3b0"/></svg>
<div class="t" style="left:874.5px;top:50.9px;font-size:5.2px;color:#c9c9c9;transform:scaleX(0.8883);transform-origin:0 0;">Sky Light</div>
<svg style="left:899.5px;top:38.0px" width="12" height="12" viewBox="-6 -6 12 12"><circle r="4.8" fill="url(#gwht)"/></svg>
<div class="t" style="left:898px;top:50.9px;font-size:5.2px;color:#c9c9c9;transform:scaleX(0.8237);transform-origin:0 0;">GI Light</div>
<svg style="left:925.0px;top:38.0px" width="12" height="12" viewBox="-6 -6 12 12"><path d="M-3.4 -4.6C-1 -4.8 -0.6 -2 0.6 0C1.8 2 4.4 2 4.4 4.2C1 5 -2 3 -2.6 0C-3 -1.8 -4.2 -3 -3.4 -4.6z" fill="#8fb8e8"/><path d="M-3 -4.2C-1.4 -3.4 -1 -1 0 0.6" stroke="#f2f7ff" stroke-width="1" fill="none"/></svg>
<div class="t" style="left:918px;top:50.9px;font-size:5.2px;color:#c9c9c9;transform:scaleX(0.8816);transform-origin:0 0;">Caustic Light</div>
<svg style="left:954.5px;top:38.0px" width="12" height="12" viewBox="-6 -6 12 12"><path d="M-4.8 -4.6L-2.4 -5L5 3.2L3 4.8z" fill="#a8b83a"/><path d="M-3.6 -3.4L3.4 3.6" stroke="#e6e27a" stroke-width="0.9"/><path d="M-4.8 -4.6L3 4.8L1.6 5z" fill="#5a7a22"/></svg>
<div class="t" style="left:948.5px;top:50.9px;font-size:5.2px;color:#c9c9c9;transform:scaleX(0.8933);transform-origin:0 0;">Portal Light</div>
<svg style="left:984.5px;top:38.0px" width="12" height="12" viewBox="-6 -6 12 12"><circle cy="-1.2" r="3.6" fill="#e6f2ee"/><path d="M-1.6 1.6H1.6V4.4H-1.6z" fill="#9aa6a2"/><circle cx="-0.8" cy="-2" r="1.4" fill="#ffffff"/></svg>
<div class="t" style="left:976px;top:50.9px;font-size:5.2px;color:#c9c9c9;transform:scaleX(0.9120);transform-origin:0 0;">Ambient Light</div>
<svg style="left:1017.5px;top:36.5px" width="12" height="12" viewBox="-6 -6 12 12"><path d="M-5.2 -1.6H5.2V2.8H-5.2z" fill="#54585c"/><circle cx="-2.8" cy="-2.2" r="1.8" fill="#c9ced2"/><circle cx="2.4" cy="-2.2" r="1.8" fill="#c9ced2"/><circle cx="-2.6" cy="0.8" r="1.4" fill="#1c1e20"/><circle cx="2.6" cy="0.8" r="1.4" fill="#1c1e20"/></svg>
<div class="t" style="left:1017px;top:47.2px;font-size:5.2px;color:#c9c9c9;transform:scaleX(0.8485);transform-origin:0 0;">Stereo</div>
<div class="t" style="left:1015px;top:52.2px;font-size:5.2px;color:#c9c9c9;transform:scaleX(0.9192);transform-origin:0 0;">Camera</div>
<svg style="left:1047.0px;top:38.0px" width="12" height="12" viewBox="-6 -6 12 12"><path d="M-5 -0.6L2.6 -2.4L5 0.8L-2.6 3.6z" fill="#6a6f74"/><path d="M-4 -2.2L1 -4.4L2.6 -2.4L-5 -0.6z" fill="#c8cdd2"/><path d="M1 -4.4L3.6 -5" stroke="#c8cdd2" stroke-width="0.8"/></svg>
<div class="t" style="left:1042px;top:50.9px;font-size:5.2px;color:#c9c9c9;transform:scaleX(0.8099);transform-origin:0 0;">VR Camera</div>
<svg style="left:1071.5px;top:38.0px" width="12" height="12" viewBox="-6 -6 12 12"><path d="M-3.6 -0.6L1 -3L4.6 2.4L0 4.8z" fill="#c3c8cc"/><path d="M-3.8 -4.6L-0.6 -2" stroke="#e6eaee" stroke-width="1.2"/><path d="M-2 0.4L2.6 -2" stroke="#6e7478" stroke-width="0.7"/></svg>
<div class="t" style="left:1069.5px;top:50.9px;font-size:5.2px;color:#c9c9c9;transform:scaleX(0.8275);transform-origin:0 0;">Switcher</div>
<svg style="left:1099.5px;top:36.5px" width="12" height="12" viewBox="-6 -6 12 12"><path d="M-5 4.4C-5.6 0 -4.4 -3.6 -2.6 -3.6H2.6C4.4 -3.6 5.6 0 5 4.4C3.6 4.4 3 2 2 1.4H-2C-3 2 -3.6 4.4 -5 4.4z" fill="#eef0f2"/><circle cx="-2.6" cy="-1" r="1.1" fill="#333"/><circle cx="3.2" cy="-1.6" r="0.6" fill="#d33"/><circle cx="2" cy="-0.4" r="0.6" fill="#36c"/></svg>
<div class="t" style="left:1096px;top:47.2px;font-size:5.2px;color:#c9c9c9;transform:scaleX(0.8320);transform-origin:0 0;">Gamepad</div>
<div class="t" style="left:1097px;top:52.2px;font-size:5.2px;color:#c9c9c9;transform:scaleX(0.9192);transform-origin:0 0;">Camera</div>
<div class="a" style="left:0px;top:58px;width:1280px;height:10px;background:#222222;"></div>
<div class="a" style="left:0px;top:57.5px;width:1280px;height:1px;background:#2a2a2a;"></div>
<div class="a" style="left:3px;top:58.5px;width:43px;height:9.5px;background:#3c3c3c;border-radius:2px 2px 0 0"></div>
<div class="t" style="left:6px;top:60.9px;font-size:5.9px;color:#e2e2e2;transform:scaleX(0.8051);transform-origin:0 0;">Scene View</div>
<div class="a" style="left:40px;top:62px;width:2.2px;height:2.2px;background:#e8e8e8;"></div>
<div class="a" style="left:46.5px;top:58.5px;width:53px;height:9.5px;background:#2b2b2b;border-radius:2px 2px 0 0"></div>
<div class="t" style="left:50px;top:60.9px;font-size:5.9px;color:#cfcfcf;transform:scaleX(0.8778);transform-origin:0 0;">Animation Editor</div>
<div class="a" style="left:94px;top:62px;width:2.2px;height:2.2px;background:#e8e8e8;"></div>
<div class="a" style="left:100.5px;top:58.5px;width:43px;height:9.5px;background:#2b2b2b;border-radius:2px 2px 0 0"></div>
<div class="t" style="left:103px;top:60.9px;font-size:5.9px;color:#cfcfcf;transform:scaleX(0.8315);transform-origin:0 0;">Render View</div>
<div class="a" style="left:138px;top:62px;width:2.2px;height:2.2px;background:#e8e8e8;"></div>
<div class="a" style="left:144.5px;top:58.5px;width:50px;height:9.5px;background:#2b2b2b;border-radius:2px 2px 0 0"></div>
<div class="t" style="left:148px;top:60.9px;font-size:5.9px;color:#cfcfcf;transform:scaleX(0.8231);transform-origin:0 0;">Composite View</div>
<div class="a" style="left:189px;top:62px;width:2.2px;height:2.2px;background:#e8e8e8;"></div>
<div class="a" style="left:195.5px;top:58.5px;width:50px;height:9.5px;background:#2b2b2b;border-radius:2px 2px 0 0"></div>
<div class="t" style="left:200px;top:60.9px;font-size:5.9px;color:#cfcfcf;transform:scaleX(0.8008);transform-origin:0 0;">Motion FX View</div>
<div class="a" style="left:240px;top:62px;width:2.2px;height:2.2px;background:#e8e8e8;"></div>
<div class="a" style="left:246.5px;top:58.5px;width:65px;height:9.5px;background:#2b2b2b;border-radius:2px 2px 0 0"></div>
<div class="t" style="left:249px;top:60.9px;font-size:5.9px;color:#cfcfcf;transform:scaleX(0.8361);transform-origin:0 0;">Geometry Spreadsheet</div>
<div class="a" style="left:306px;top:62px;width:2.2px;height:2.2px;background:#e8e8e8;"></div>
<svg style="left:314px;top:60px" width="6" height="6" viewBox="0 0 6 6"><path d="M3 0v6M0 3h6" stroke="#eee" stroke-width="1.3"/></svg>
<div class="a" style="left:655px;top:58.5px;width:51.5px;height:9.5px;background:#3c3c3c;border-radius:2px 2px 0 0"></div>
<div class="t" style="left:659px;top:60.9px;font-size:5.9px;color:#e2e2e2;transform:scaleX(0.8115);transform-origin:0 0;">/obj/CFX_setup</div>
<div class="a" style="left:700.5px;top:62px;width:2.2px;height:2.2px;background:#e8e8e8;"></div>
<div class="a" style="left:707.0px;top:58.5px;width:38.0px;height:9.5px;background:#2b2b2b;border-radius:2px 2px 0 0"></div>
<div class="t" style="left:710px;top:60.9px;font-size:5.9px;color:#cfcfcf;transform:scaleX(0.8195);transform-origin:0 0;">Tree View</div>
<div class="a" style="left:739.5px;top:62px;width:2.2px;height:2.2px;background:#e8e8e8;"></div>
<div class="a" style="left:746.0px;top:58.5px;width:50.5px;height:9.5px;background:#2b2b2b;border-radius:2px 2px 0 0"></div>
<div class="t" style="left:749px;top:60.9px;font-size:5.9px;color:#cfcfcf;transform:scaleX(0.8782);transform-origin:0 0;">Material Palette</div>
<div class="a" style="left:791px;top:62px;width:2.2px;height:2.2px;background:#e8e8e8;"></div>
<div class="a" style="left:797.5px;top:58.5px;width:47.5px;height:9.5px;background:#2b2b2b;border-radius:2px 2px 0 0"></div>
<div class="t" style="left:800.5px;top:60.9px;font-size:5.9px;color:#cfcfcf;transform:scaleX(0.8413);transform-origin:0 0;">Asset Browser</div>
<div class="a" style="left:839.5px;top:62px;width:2.2px;height:2.2px;background:#e8e8e8;"></div>
<svg style="left:848px;top:60px" width="6" height="6" viewBox="0 0 6 6"><path d="M3 0v6M0 3h6" stroke="#eee" stroke-width="1.3"/></svg>
<div class="a" style="left:651px;top:58px;width:2px;height:613px;background:#2e2e2e;"></div>
<div class="a" style="left:653px;top:58px;width:2px;height:613px;background:#525252;"></div>
<div class="a" style="left:0px;top:58px;width:3px;height:43px;background:#444444;"></div>
<div class="a" style="left:0px;top:101px;width:3px;height:606px;background:#3c3c3c;"></div>
<div class="a" style="left:1px;top:101px;width:1.4px;height:570px;background:#505050;"></div>
<div class="a" style="left:636px;top:61px;width:5px;height:3.5px;background:#f0f0f0;"></div>
<svg style="left:645.5px;top:61px" width="4" height="4" viewBox="0 0 4 4"><path d="M0 0.5h4L2 3.5z" fill="#ddd"/></svg>
<div class="a" style="left:1264px;top:61px;width:5px;height:3.5px;background:#f0f0f0;"></div>
<svg style="left:1273.5px;top:61px" width="4" height="4" viewBox="0 0 4 4"><path d="M0 0.5h4L2 3.5z" fill="#ddd"/></svg>
<div class="a" style="left:3px;top:68px;width:649px;height:16.5px;background:#3c3c3c;"></div>
<div class="a" style="left:655px;top:68px;width:625px;height:16.5px;background:#3c3c3c;"></div>
<svg style="left:5.5px;top:72px" width="10" height="9" viewBox="0 0 10 9"><path d="M0 4L4.5 0V2.4H9V5.6H4.5V8z" fill="#f2f2f2"/></svg>
<svg style="left:17.5px;top:72px;transform:scaleX(-1)" width="9" height="8" viewBox="0 0 10 9"><path d="M0 4L4.5 0V2.4H9V5.6H4.5V8z" fill="#5a5a5a"/></svg>
<div class="a" style="left:30px;top:70px;width:553px;height:12px;background:linear-gradient(#2b2b2b,#343434);border-radius:1px"></div>
<div class="a" style="left:577px;top:70px;width:6px;height:12px;background:#262626;"></div>
<svg style="left:578.5px;top:74.5px" width="3" height="3" viewBox="0 0 4 4"><path d="M0 0.5h4L2 3.5z" fill="#bbb"/></svg>
<svg style="left:33px;top:72px" width="9" height="9" viewBox="0 0 9 9"><path d="M1 0.5V8.5M1 3H4M1 6.5H4" stroke="#d8d8d8" stroke-width="0.9" fill="none"/><rect x="4" y="1.6" width="3" height="2.4" fill="#e8e8e8"/><rect x="4" y="5.3" width="4.4" height="2.6" fill="#bfc7cf"/></svg>
<div class="t" style="left:44px;top:72.8px;font-size:6.8px;color:#d8d8d8;transform:scaleX(0.9367);transform-origin:0 0;">obj</div>
<div class="a" style="left:55.5px;top:70px;width:1px;height:12px;background:#3c3c3c;"></div>
<svg style="left:59px;top:71.8px" width="10" height="9" viewBox="0 0 10 9"><rect x="0.3" y="0.6" width="3.6" height="6" fill="#3d7fe0"/><rect x="0.8" y="0" width="3" height="2" fill="#dfe8f5"/><circle cx="7.2" cy="3.6" r="2.5" fill="#e02a2a"/><path d="M2.6 8.6L4.8 4L7 8.6z" fill="#f0e02a"/></svg>
<div class="t" style="left:70.5px;top:72.8px;font-size:6.8px;color:#e2e2e2;transform:scaleX(0.7790);transform-origin:0 0;">CFX_setup</div>
<svg style="left:587.5px;top:72px" width="10" height="8" viewBox="0 0 10 8"><path d="M0 4H4" stroke="#ddd" stroke-width="0.8"/><path d="M4 1.4L6 2.6H9.4V5.4H6L4 6.6z" fill="#e6e6e6"/><path d="M4.6 0.4V7.6" stroke="#e6e6e6" stroke-width="1.1"/></svg>
<svg style="left:599px;top:71px" width="10" height="10" viewBox="0 0 10 10"><circle cx="5" cy="5" r="4.3" fill="#39455a" stroke="#5b84c8" stroke-width="0.9"/><circle cx="5" cy="5" r="0.9" fill="#9bb4dc"/><path d="M5 5L7.6 2.6" stroke="#7da0d8" stroke-width="0.6"/></svg>
<svg style="left:616px;top:71px" width="11" height="11" viewBox="-6 -6 12 12"><path d="M-4.5 -2.5L0 -4.5L4.5 -2.5V2.5L0 4.8L-4.5 2.5z" fill="#aab2b8"/><path d="M-4.5 -2.5L0 -4.5L4.5 -2.5L0 -0.6z" fill="#e4e8ea"/><path d="M0 -0.6L4.5 -2.5V2.5L0 4.8z" fill="#80888e"/></svg>
<svg style="left:630.5px;top:72px" width="9" height="9" viewBox="-6 -6 12 12"><circle r="4.8" fill="url(#gblu)"/></svg>
<div class="a" style="left:641px;top:72px;width:8.5px;height:8.5px;background:#d8d8d8;border:1px solid #f4f4f4"></div>
<svg style="left:657px;top:72px" width="10" height="9" viewBox="0 0 10 9"><path d="M0 4L4.5 0V2.4H9V5.6H4.5V8z" fill="#f2f2f2"/></svg>
<svg style="left:669px;top:72px;transform:scaleX(-1)" width="9" height="8" viewBox="0 0 10 9"><path d="M0 4L4.5 0V2.4H9V5.6H4.5V8z" fill="#5a5a5a"/></svg>
<div class="a" style="left:681px;top:70px;width:573px;height:12px;background:linear-gradient(#2b2b2b,#343434);border-radius:1px"></div>
<div class="a" style="left:1247px;top:70px;width:7px;height:12px;background:#262626;"></div>
<svg style="left:1249px;top:74.5px" width="3" height="3" viewBox="0 0 4 4"><path d="M0 0.5h4L2 3.5z" fill="#bbb"/></svg>
<svg style="left:685px;top:72px" width="9" height="9" viewBox="0 0 9 9"><path d="M1 0.5V8.5M1 3H4M1 6.5H4" stroke="#d8d8d8" stroke-width="0.9" fill="none"/><rect x="4" y="1.6" width="3" height="2.4" fill="#e8e8e8"/><rect x="4" y="5.3" width="4.4" height="2.6" fill="#bfc7cf"/></svg>
<div class="t" style="left:696px;top:72.8px;font-size:6.8px;color:#d8d8d8;transform:scaleX(0.9367);transform-origin:0 0;">obj</div>
<div class="a" style="left:708px;top:70px;width:1px;height:12px;background:#3c3c3c;"></div>
<svg style="left:712px;top:71.8px" width="10" height="9" viewBox="0 0 10 9"><rect x="0.3" y="0.6" width="3.6" height="6" fill="#3d7fe0"/><rect x="0.8" y="0" width="3" height="2" fill="#dfe8f5"/><circle cx="7.2" cy="3.6" r="2.5" fill="#e02a2a"/><path d="M2.6 8.6L4.8 4L7 8.6z" fill="#f0e02a"/></svg>
<div class="t" style="left:723px;top:72.8px;font-size:6.8px;color:#e2e2e2;transform:scaleX(0.7643);transform-origin:0 0;">CFX_setup</div>
<svg style="left:1256.5px;top:72px" width="10" height="8" viewBox="0 0 10 8"><path d="M0 4H4" stroke="#ddd" stroke-width="0.8"/><path d="M4 1.4L6 2.6H9.4V5.4H6L4 6.6z" fill="#e6e6e6"/><path d="M4.6 0.4V7.6" stroke="#e6e6e6" stroke-width="1.1"/></svg>
<svg style="left:1267.5px;top:71px" width="10" height="10" viewBox="0 0 10 10"><circle cx="5" cy="5" r="4.3" fill="#39455a" stroke="#5b84c8" stroke-width="0.9"/><circle cx="5" cy="5" r="0.9" fill="#9bb4dc"/></svg>
<div class="a" style="left:3px;top:84.5px;width:649px;height:16.5px;background:#2b2b2b;"></div>
<div class="a" style="left:3px;top:84.5px;width:649px;height:1px;background:#1e1e1e;"></div>
<div class="a" style="left:655px;top:84.5px;width:625px;height:15.5px;background:#2b2b2b;"></div>
<div class="a" style="left:655px;top:84.5px;width:625px;height:1px;background:#1e1e1e;"></div>
<svg style="left:10.5px;top:89.5px" width="9" height="9" viewBox="0 0 9 9"><g fill="#e6e6e6"><rect x="0.0" y="0.0" width="1.4" height="1.4"/><rect x="0.0" y="2.5" width="1.4" height="1.4"/><rect x="0.0" y="5.0" width="1.4" height="1.4"/><rect x="2.5" y="0.0" width="1.4" height="1.4"/><rect x="2.5" y="2.5" width="1.4" height="1.4"/><rect x="2.5" y="5.0" width="1.4" height="1.4"/><rect x="5.0" y="0.0" width="1.4" height="1.4"/><rect x="5.0" y="2.5" width="1.4" height="1.4"/><rect x="5.0" y="5.0" width="1.4" height="1.4"/></g><path d="M6.6 8.8L8.8 8.8L8.8 6.8z" fill="#aaa"/></svg>
<svg style="left:4px;top:86px" width="3" height="3"><circle cx="1.5" cy="1.5" r="1" fill="#111"/></svg>
<svg style="left:629px;top:88.5px" width="9" height="10" viewBox="0 0 9 10"><g fill="#5f9be6"><circle cx="2" cy="1.2" r="1.1"/><rect x="0.6" y="2.4" width="2.8" height="1.8"/><circle cx="6.4" cy="3.4" r="1.1"/><rect x="5" y="4.6" width="2.8" height="1.8"/><circle cx="2" cy="6.2" r="1.1"/><rect x="0.6" y="7.4" width="2.8" height="1.8"/></g><path d="M6.4 9.8L8.8 9.8L7.6 8.4z" fill="#c8b43c"/></svg>
<svg style="left:640.5px;top:88.0px" width="9" height="9" viewBox="0 0 9 9"><circle cx="4.5" cy="4.5" r="3.9" fill="#222" stroke="#e8e8e8" stroke-width="0.9"/><text x="4.5" y="6.7" font-size="6" font-weight="bold" text-anchor="middle" fill="#fff" font-family="Liberation Sans,sans-serif">?</text></svg>
<div class="t" style="left:664px;top:88.8px;font-size:7.0px;color:#dedede;transform:scaleX(0.9233);transform-origin:0 0;">Add</div>
<div class="t" style="left:683px;top:88.8px;font-size:7.0px;color:#dedede;transform:scaleX(0.9119);transform-origin:0 0;">Edit</div>
<div class="t" style="left:701.5px;top:88.8px;font-size:7.0px;color:#dedede;transform:scaleX(0.8567);transform-origin:0 0;">Go</div>
<div class="t" style="left:717px;top:88.8px;font-size:7.0px;color:#dedede;transform:scaleX(0.8640);transform-origin:0 0;">View</div>
<div class="t" style="left:738px;top:88.8px;font-size:7.0px;color:#dedede;transform:scaleX(0.9179);transform-origin:0 0;">Tools</div>
<div class="t" style="left:760.5px;top:88.8px;font-size:7.0px;color:#dedede;transform:scaleX(0.9040);transform-origin:0 0;">Layout</div>
<div class="t" style="left:786px;top:88.8px;font-size:7.0px;color:#dedede;transform:scaleX(0.8235);transform-origin:0 0;">Labs</div>
<div class="t" style="left:805px;top:88.8px;font-size:7.0px;color:#dedede;transform:scaleX(0.9030);transform-origin:0 0;">Help</div>
<svg style="left:656.5px;top:85.5px" width="3" height="3"><circle cx="1.5" cy="1.5" r="1" fill="#111"/></svg>
<div class="a" style="left:3px;top:101px;width:17px;height:570px;background:#3a3a3a;"></div>
<div class="a" style="left:3px;top:101px;width:17px;height:8px;background:#303030;"></div>
<svg style="left:4px;top:103px" width="3" height="3"><circle cx="1.5" cy="1.5" r="1" fill="#111"/></svg>
<svg style="left:5.800000000000001px;top:110.0px" width="12" height="12" viewBox="-6 -6 12 12"><circle cx="1.6" cy="-1.8" r="3.2" fill="#8d949a"/><path d="M-4.6 3.8L-0.6 -4L3 3.8z" fill="#f3e03a" stroke="#fff6a0" stroke-width="0.6"/><path d="M5.4 5.8L5.4 3.6L3.4 5.8z" fill="#aaa"/></svg>
<div class="a" style="left:5.5px;top:122.5px;width:13.0px;height:11.5px;background:#7d93b5;border:1px solid #9fb4d6;border-radius:1px"></div>
<svg style="left:5.800000000000001px;top:122.19999999999999px" width="12" height="12" viewBox="-6 -6 12 12"><circle cx="0.4" cy="-1.8" r="3" fill="#9aa1a8"/><path d="M-1 -1.6L3.4 1.6L-1 4.6L-4.2 1.6z" fill="#f3e03a" stroke="#fff6a0" stroke-width="0.5"/><circle cx="-0.4" cy="1.6" r="0.8" fill="#fff"/><path d="M5.4 5.8L5.4 3.6L3.4 5.8z" fill="#aaa"/></svg>
<svg style="left:5.800000000000001px;top:134.0px" width="12" height="12" viewBox="-6 -6 12 12"><path d="M-4 -2.6L0 -4.6L4 -2.6V2.4L0 4.6L-4 2.4z" fill="#9a8f2a"/><path d="M-3 -1.4L0.6 -3L3.2 0.4L-0.4 3z" fill="#f3e03a" stroke="#fff6a0" stroke-width="0.5"/><path d="M5.4 5.8L5.4 3.6L3.4 5.8z" fill="#aaa"/></svg>
<svg style="left:5.800000000000001px;top:152.5px" width="12" height="12" viewBox="-6 -6 12 12"><path d="M-3.4 -5L-3.4 3.6L-1.2 1.8L0.6 5.4L2 4.8L0.4 1.2L3.2 1z" fill="#f4f4f4" stroke="#222" stroke-width="0.4"/><path d="M5.6 5.6L5.6 4L4 5.6z" fill="#aaa"/></svg>
<div class="a" style="left:5.5px;top:166px;width:13.0px;height:13px;background:#7d93b5;border:1px solid #9fb4d6;border-radius:1px"></div>
<svg style="left:5.800000000000001px;top:166.6px" width="12" height="12" viewBox="-6 -6 12 12"><rect x="-2.8" y="-0.6" width="5.6" height="4.8" rx="0.6" fill="#fafafa"/><path d="M-1.7 -0.6V-2.4A1.7 1.7 0 0 1 1.7 -2.4V-0.6" fill="none" stroke="#fafafa" stroke-width="1.1"/><circle cy="1.6" r="0.8" fill="#7d93b5"/></svg>
<svg style="left:5.800000000000001px;top:180.5px" width="12" height="12" viewBox="-6 -6 12 12"><path d="M-4.4 2.8L0 -0.6L4.4 2.8" stroke="#e02a2a" stroke-width="1.6" fill="none"/><rect x="-2" y="-3.6" width="4" height="3.6" fill="#dcdcdc" stroke="#777" stroke-width="0.5"/><circle cx="-4.2" cy="3" r="1.2" fill="#e02a2a"/><circle cx="4.2" cy="3" r="1.2" fill="#e02a2a"/></svg>
<svg style="left:5.800000000000001px;top:194.5px" width="12" height="12" viewBox="-6 -6 12 12"><path d="M-4.6 3.2A4.6 2.2 0 0 0 4.6 3.2" stroke="#e0402a" stroke-width="1.6" fill="none"/><circle cy="-1" r="3.2" fill="url(#gsph)"/></svg>
<svg style="left:5.800000000000001px;top:209.0px" width="12" height="12" viewBox="-6 -6 12 12"><rect x="-1.8" y="-2" width="3.6" height="4.6" fill="#7b7b7b"/><path d="M0 -5.4L1.8 -2.6H-1.8z" fill="#e02a2a"/><path d="M-2.6 4.8L0 3L2.6 4.8" stroke="#e02a2a" stroke-width="1.1" fill="none"/></svg>
<svg style="left:5.800000000000001px;top:222.5px" width="12" height="12" viewBox="-6 -6 12 12"><path d="M0 -5V5M-4 -3.4L4 3.4M-4 3.4L4 -3.4" stroke="#f0f0f0" stroke-width="1"/><circle cx="-2.4" cy="2.6" r="1.1" fill="#e02a2a"/><circle cx="2.6" cy="-2.2" r="0.9" fill="#e02a2a"/></svg>
<div class="a" style="left:5.5px;top:236px;width:13.0px;height:14px;background:#7d93b5;border:1px solid #9fb4d6;border-radius:1px"></div>
<svg style="left:5.800000000000001px;top:237.0px" width="12" height="12" viewBox="-6 -6 12 12"><path d="M-4 4L-1.6 -4.6L1 2.6z" fill="#3cc83c"/><path d="M-4.6 1.2L4.4 -1.4L4 1.6z" fill="#f0d02a"/><path d="M-2 3.6L4.6 3L3 5z" fill="#e03a2a"/><path d="M-1 -1L3 -2" stroke="#2d6cd6" stroke-width="1"/><path d="M5.4 5.8L5.4 3.6L3.4 5.8z" fill="#aaa"/></svg>
<svg style="left:5.800000000000001px;top:255.0px" width="12" height="12" viewBox="-6 -6 12 12"><g transform="translate(-1.4,-1.2) scale(0.85)"><path d="M-3.4 3V-1A3.4 3.4 0 0 1 3.4 -1V3H1.3V-1A1.3 1.3 0 0 0 -1.3 -1V3z" fill="#e8323c"/><path d="M-3.4 3h2.1v-1.3h-2.1zM1.3 3h2.1v-1.3h-2.1z" fill="#f4f4f4"/></g><path d="M0 0H5.6V5.4H0zM2.8 0V5.4M0 2.7H5.6" stroke="#eee" stroke-width="0.6" fill="none"/><path d="M5.4 5.8L5.4 3.6L3.4 5.8z" fill="#aaa"/></svg>
<svg style="left:5.800000000000001px;top:269.0px" width="12" height="12" viewBox="-6 -6 12 12"><g transform="translate(-1.4,-1.4) scale(0.85)"><path d="M-3.4 3V-1A3.4 3.4 0 0 1 3.4 -1V3H1.3V-1A1.3 1.3 0 0 0 -1.3 -1V3z" fill="#e8323c"/><path d="M-3.4 3h2.1v-1.3h-2.1zM1.3 3h2.1v-1.3h-2.1z" fill="#f4f4f4"/></g><path d="M-4.6 4.6C-1 4.6 1 1.4 5.2 1.6" stroke="#eee" stroke-width="0.8" fill="none"/><path d="M5.4 5.8L5.4 3.6L3.4 5.8z" fill="#aaa"/></svg>
<svg style="left:5.800000000000001px;top:282.5px" width="12" height="12" viewBox="-6 -6 12 12"><g transform="translate(-1.4,-1.4) scale(0.85)"><path d="M-3.4 3V-1A3.4 3.4 0 0 1 3.4 -1V3H1.3V-1A1.3 1.3 0 0 0 -1.3 -1V3z" fill="#e8323c"/><path d="M-3.4 3h2.1v-1.3h-2.1zM1.3 3h2.1v-1.3h-2.1z" fill="#f4f4f4"/></g><circle cx="2.6" cy="2" r="1.2" fill="#eee"/><circle cx="4.6" cy="4" r="0.9" fill="#eee"/><path d="M5.4 5.8L5.4 3.6L3.4 5.8z" fill="#aaa"/></svg>
<svg style="left:5.300000000000001px;top:296.5px" width="13" height="13" viewBox="-6 -6 12 12"><g transform="scale(1.35)"><path d="M-3.4 3.4V-1A3.4 3.4 0 0 1 3.4 -1V3.4H1.3V-1A1.3 1.3 0 0 0 -1.3 -1V3.4z" fill="#e8323c"/><path d="M-3.4 3.4h2.1v-1.3h-2.1zM1.3 3.4h2.1v-1.3h-2.1z" fill="#f4f4f4"/></g></svg>
<svg style="left:5.800000000000001px;top:315.0px" width="12" height="12" viewBox="-6 -6 12 12"><circle cx="-1.8" cy="-1" r="2.3" fill="#1f1f1f"/><circle cx="2" cy="-1.6" r="2.1" fill="#262626"/><circle cx="0.6" cy="2" r="2.4" fill="#1b1b1b"/><path d="M5.4 5.8L5.4 3.6L3.4 5.8z" fill="#aaa"/></svg>
<svg style="left:5.550000000000001px;top:328.75px" width="12.5" height="12.5" viewBox="-6 -6 12 12"><circle r="4.8" fill="#2a2a2a" stroke="#e6e6e6" stroke-width="0.9"/><circle cx="-0.6" cy="-0.6" r="2.2" fill="#151515"/><rect x="1.6" y="1.6" width="3.8" height="3.8" fill="#e6b8b8" stroke="#d83a3a" stroke-width="0.7"/></svg>
<svg style="left:5.550000000000001px;top:343.75px" width="12.5" height="12.5" viewBox="-6 -6 12 12"><path d="M-5 -0.6A5 4.6 0 0 0 5 -0.6z" fill="#eef3f4"/><ellipse cy="-0.6" rx="5" ry="1.6" fill="#b9c4c8"/><circle cy="-2.4" r="2" fill="#30363a"/></svg>
<svg style="left:6.300000000000001px;top:644.5px" width="11" height="11" viewBox="-6 -6 12 12"><path d="M-4 -1.6L1.6 -4.4L4.6 -0.4L-1 2.4z" fill="#e8ecef"/><path d="M-1 2.4L4.6 -0.4V1.2L-1 4.2z" fill="#8a949b"/><path d="M-4 -1.6V0L-1 4.2V2.4z" fill="#b4bcc2"/><path d="M-2 -2.6L3.6 -1.8" stroke="#c33" stroke-width="0.7"/><path d="M5.4 5.8L5.4 3.6L3.4 5.8z" fill="#aaa"/></svg>
<svg style="left:6.300000000000001px;top:657.0px" width="11" height="11" viewBox="-6 -6 12 12"><circle r="4.6" fill="#cfd5d9" stroke="#8d959b" stroke-width="0.7"/><ellipse rx="4.4" ry="1.7" fill="none" stroke="#5d666d" stroke-width="0.7"/><circle r="1.4" fill="#f6f6f6"/><path d="M5.4 5.8L5.4 3.6L3.4 5.8z" fill="#aaa"/></svg>
<div class="a" style="left:20px;top:101px;width:619.5px;height:570.4px;overflow:hidden;background:linear-gradient(#5f7784 0px,#7d9ba8 1.2px,#6a8390 2.6px,#6e8793 60px,#768d98 130px,#7e949d 190px,#84999f 221px,#8ba0a7 232px,#9bb0b6 262px,#a7b8bd 300px,#b2c0c4 360px,#bcc8ca 440px,#c4cecf 520px,#c8d0d0 570px)">
<svg style="left:0;top:0" width="619.5" height="570.4" viewBox="0 0 619.5 570.4"><defs><linearGradient id="gfade" x1="0" y1="221" x2="0" y2="570.4" gradientUnits="userSpaceOnUse"><stop offset="0" stop-color="#fff" stop-opacity="0"/><stop offset="0.08" stop-color="#fff" stop-opacity="0.16"/><stop offset="0.22" stop-color="#fff" stop-opacity="0.45"/><stop offset="0.5" stop-color="#fff" stop-opacity="0.85"/><stop offset="1" stop-color="#fff" stop-opacity="1"/></linearGradient><mask id="mfade"><rect x="0" y="0" width="619.5" height="570.4" fill="url(#gfade)"/></mask></defs><g mask="url(#mfade)" fill="none" stroke="#52707e" stroke-width="0.7" stroke-opacity="0.4"><path d="M-50.6 222L-3416.2 569M-45.3 222L-3362.5 569M-40.0 222L-3308.8 569M-34.7 222L-3255.0 569M-29.4 222L-3201.2 569M-24.0 222L-3147.5 569M-18.7 222L-3093.8 569M-13.4 222L-3040.0 569M-8.1 222L-2986.2 569M-2.8 222L-2932.5 569M2.5 222L-2878.8 569M7.8 222L-2825.0 569M13.1 222L-2771.2 569M18.4 222L-2717.5 569M23.7 222L-2663.8 569M29.0 222L-2610.0 569M34.3 222L-2556.2 569M39.6 222L-2502.5 569M44.9 222L-2448.8 569M50.2 222L-2395.0 569M55.5 222L-2341.2 569M60.8 222L-2287.5 569M66.1 222L-2233.8 569M71.4 222L-2180.0 569M76.7 222L-2126.2 569M82.1 222L-2072.5 569M87.4 222L-2018.8 569M92.7 222L-1965.0 569M98.0 222L-1911.2 569M103.3 222L-1857.5 569M108.6 222L-1803.8 569M113.9 222L-1750.0 569M119.2 222L-1696.2 569M124.5 222L-1642.5 569M129.8 222L-1588.8 569M135.1 222L-1535.0 569M140.4 222L-1481.2 569M145.7 222L-1427.5 569M151.0 222L-1373.8 569M156.3 222L-1320.0 569M161.6 222L-1266.2 569M166.9 222L-1212.5 569M172.2 222L-1158.8 569M177.5 222L-1105.0 569M182.9 222L-1051.2 569M188.2 222L-997.5 569M193.5 222L-943.8 569M198.8 222L-890.0 569M204.1 222L-836.2 569M209.4 222L-782.5 569M214.7 222L-728.8 569M220.0 222L-675.0 569M225.3 222L-621.2 569M230.6 222L-567.5 569M235.9 222L-513.8 569M241.2 222L-460.0 569M246.5 222L-406.2 569M251.8 222L-352.5 569M257.1 222L-298.8 569M262.4 222L-245.0 569M267.7 222L-191.2 569M273.0 222L-137.5 569M278.3 222L-83.8 569M283.7 222L-30.0 569M289.0 222L23.8 569M294.3 222L77.5 569M299.6 222L131.2 569M304.9 222L185.0 569M310.2 222L238.8 569M315.5 222L292.5 569M320.8 222L346.2 569M326.1 222L400.0 569M331.4 222L453.8 569M336.7 222L507.5 569M342.0 222L561.2 569M347.3 222L615.0 569M352.6 222L668.8 569M357.9 222L722.5 569M363.2 222L776.2 569M368.5 222L830.0 569M373.8 222L883.8 569M379.1 222L937.5 569M384.5 222L991.2 569M389.8 222L1045.0 569M395.1 222L1098.8 569M400.4 222L1152.5 569M405.7 222L1206.2 569M411.0 222L1260.0 569M416.3 222L1313.8 569M421.6 222L1367.5 569M426.9 222L1421.2 569M432.2 222L1475.0 569M437.5 222L1528.8 569M442.8 222L1582.5 569M448.1 222L1636.2 569M453.4 222L1690.0 569M458.7 222L1743.8 569M464.0 222L1797.5 569M469.3 222L1851.2 569M474.6 222L1905.0 569M479.9 222L1958.8 569M485.2 222L2012.5 569M490.6 222L2066.2 569M495.9 222L2120.0 569M501.2 222L2173.8 569M506.5 222L2227.5 569M511.8 222L2281.2 569M517.1 222L2335.0 569M522.4 222L2388.8 569M527.7 222L2442.5 569M533.0 222L2496.2 569M538.3 222L2550.0 569M543.6 222L2603.8 569M548.9 222L2657.5 569M554.2 222L2711.2 569M559.5 222L2765.0 569M564.8 222L2818.8 569M570.1 222L2872.5 569M575.4 222L2926.2 569M580.7 222L2980.0 569M586.0 222L3033.8 569M591.4 222L3087.5 569M596.7 222L3141.2 569M602.0 222L3195.0 569M607.3 222L3248.8 569M612.6 222L3302.5 569M617.9 222L3356.2 569M623.2 222L3410.0 569M628.5 222L3463.8 569M633.8 222L3517.5 569M639.1 222L3571.2 569M644.4 222L3625.0 569M649.7 222L3678.8 569M655.0 222L3732.5 569M660.3 222L3786.2 569M665.6 222L3840.0 569M670.9 222L3893.8 569M676.2 222L3947.5 569M681.5 222L4001.2 569M686.8 222L4055.0 569M692.2 222L4108.8 569"/><path d="M0 588.91H620M0 559.00H620M0 533.20H620M0 510.72H620M0 490.97H620M0 473.46H620M0 457.85H620M0 443.83H620M0 431.18H620M0 419.70H620M0 409.24H620M0 399.67H620M0 390.88H620M0 382.78H620M0 375.29H620M0 368.34H620M0 361.88H620M0 355.86H620M0 350.23H620M0 344.96H620M0 340.01H620M0 335.36H620M0 330.98H620M0 326.84H620M0 322.93H620M0 319.23H620M0 315.72H620M0 312.39H620M0 309.22H620M0 306.21H620M0 303.34H620M0 300.59H620M0 297.98H620M0 295.47H620M0 293.08H620M0 290.78H620M0 288.58H620M0 286.47H620M0 284.44H620M0 282.50H620M0 280.62H620M0 278.82H620M0 277.08H620M0 275.40H620M0 273.79H620M0 272.22H620M0 270.72H620M0 269.26H620M0 267.85H620M0 266.49H620M0 265.17H620M0 263.89H620M0 262.66H620M0 261.46H620M0 260.29H620M0 259.16H620M0 258.06H620M0 257.00H620M0 255.96H620M0 254.96H620M0 253.98H620M0 253.03H620M0 252.10H620M0 251.20H620M0 250.32H620M0 249.47H620M0 248.63H620M0 247.82H620M0 247.03H620M0 246.26H620M0 245.50H620M0 244.77H620M0 244.05H620M0 243.34H620M0 242.66H620M0 241.99H620M0 241.33H620M0 240.69H620M0 240.07H620M0 239.45H620M0 238.86H620M0 238.27H620M0 237.70H620M0 237.13H620M0 236.58H620M0 236.04H620M0 235.52H620M0 235.00H620M0 234.49H620M0 233.99H620M0 233.51H620M0 233.03H620M0 232.56H620M0 232.10H620M0 231.65H620M0 231.20H620M0 230.77H620M0 230.34H620M0 229.92H620M0 229.51H620M0 229.11H620M0 228.71H620M0 228.32H620M0 227.94H620M0 227.56H620M0 227.19H620M0 226.82H620M0 226.47H620M0 226.11H620M0 225.77H620M0 225.43H620M0 225.09H620M0 224.76H620M0 224.44H620M0 224.12H620M0 223.80H620M0 223.49H620M0 223.19H620M0 222.89H620M0 222.59H620M0 222.30H620M0 222.01H620"/></g></svg>
<svg style="left:0;top:0" width="619.5" height="570.4" viewBox="20 101 619.5 570.4"><defs><pattern id="wire" width="2.2" height="2.2" patternUnits="userSpaceOnUse"><path d="M0 0.5H2.2M0.5 0V2.2" stroke="#3e3e3e" stroke-width="0.55" opacity="0.6"/></pattern><pattern id="wireb" width="3.2" height="3.2" patternUnits="userSpaceOnUse" patternTransform="rotate(8)"><path d="M0 0.5H3.2M0.5 0V3.2" stroke="#3a3a3a" stroke-width="0.6" opacity="0.7"/></pattern><linearGradient id="gsash" x1="0" x2="1"><stop offset="0" stop-color="#7a7a7a"/><stop offset="0.5" stop-color="#8c8c8c"/><stop offset="1" stop-color="#747474"/></linearGradient><clipPath id="cbody"><path d="M358.0 176.0 L366.0 175.0 L373.0 178.0 L378.0 184.0 L383.0 192.0 L387.5 202.0 L390.0 212.0 L390.5 221.0 L388.0 230.0 L385.0 237.0 L380.0 243.0 L376.0 247.0 L379.0 252.0 L388.0 252.0 L397.0 247.5 L407.7 243.5 L408.5 249.0 L405.5 255.0 L410.0 259.0 L422.7 266.3 L429.9 280.6 L435.6 297.6 L442.7 311.9 L455.5 329.0 L465.5 343.2 L475.4 360.3 L488.2 376.0 L492.5 380.2 L496.8 390.2 L506.7 405.8 L512.4 420.0 L513.0 428.6 L509.6 431.5 L506.7 421.0 L505.2 425.0 L503.9 431.5 L501.0 424.0 L498.2 414.4 L497.0 419.0 L495.9 421.5 L494.5 415.0 L493.9 408.7 L488.2 397.3 L481.0 392.0 L474.0 388.8 L456.9 371.7 L444.1 354.6 L429.9 334.7 L418.5 317.6 L409.9 303.3 L405.7 320.4 L401.4 343.2 L401.4 367.0 L408.0 380.0 L414.0 395.0 L419.0 415.0 L423.0 440.0 L427.5 465.0 L426.0 472.0 L420.0 478.0 L414.0 482.0 L413.0 500.0 L413.5 520.0 L417.0 535.0 L417.5 548.0 L415.0 556.0 L412.0 562.0 L411.5 590.0 L409.0 612.0 L407.0 625.0 L409.5 632.0 L414.0 642.0 L416.0 651.0 L414.5 657.0 L409.0 660.5 L400.0 661.0 L394.0 658.0 L390.5 650.0 L389.5 636.0 L387.0 622.0 L384.0 602.0 L380.0 575.0 L377.0 560.0 L372.5 553.0 L372.5 540.0 L376.0 524.0 L371.5 510.0 L368.0 498.0 L363.0 496.0 L360.0 504.0 L357.0 515.0 L352.5 522.0 L354.5 540.0 L354.5 552.0 L350.0 558.0 L347.0 566.0 L346.5 590.0 L344.0 612.0 L342.0 626.0 L341.5 636.0 L340.5 648.0 L338.0 656.0 L333.0 660.0 L324.0 661.0 L316.0 658.0 L312.5 651.0 L314.0 641.0 L319.0 633.0 L320.5 622.0 L318.5 600.0 L316.5 576.0 L315.5 563.0 L310.5 556.0 L311.0 545.0 L314.5 528.0 L315.0 512.0 L311.0 511.0 L310.5 480.0 L310.5 458.0 L303.0 448.0 L297.0 437.0 L293.5 430.0 L295.0 420.0 L300.0 409.0 L305.0 400.0 L310.2 393.7 L309.0 370.0 L309.0 331.0 L298.6 342.4 L280.7 360.3 L274.2 372.0 L256.2 387.3 L244.7 395.0 L240.0 402.0 L236.0 411.0 L233.0 419.4 L229.3 428.4 L227.0 424.0 L225.5 428.0 L224.0 431.0 L220.3 429.7 L219.8 419.4 L222.0 411.0 L225.4 404.0 L230.0 396.0 L235.7 388.6 L238.3 378.3 L252.4 363.0 L265.2 343.6 L278.0 332.0 L287.0 317.0 L294.8 303.8 L296.0 296.0 L297.5 284.0 L299.4 266.6 L308.0 262.5 L322.0 257.5 L338.0 252.5 L349.0 250.0 L352.0 246.0 L350.0 240.0 L347.0 233.0 L345.0 224.0 L342.0 217.0 L339.5 209.0 L338.5 202.0 L340.0 192.0 L344.0 184.0 L351.0 178.0z"/></clipPath></defs><path d="M358.0 176.0 L366.0 175.0 L373.0 178.0 L378.0 184.0 L383.0 192.0 L387.5 202.0 L390.0 212.0 L390.5 221.0 L388.0 230.0 L385.0 237.0 L380.0 243.0 L376.0 247.0 L379.0 252.0 L388.0 252.0 L397.0 247.5 L407.7 243.5 L408.5 249.0 L405.5 255.0 L410.0 259.0 L422.7 266.3 L429.9 280.6 L435.6 297.6 L442.7 311.9 L455.5 329.0 L465.5 343.2 L475.4 360.3 L488.2 376.0 L492.5 380.2 L496.8 390.2 L506.7 405.8 L512.4 420.0 L513.0 428.6 L509.6 431.5 L506.7 421.0 L505.2 425.0 L503.9 431.5 L501.0 424.0 L498.2 414.4 L497.0 419.0 L495.9 421.5 L494.5 415.0 L493.9 408.7 L488.2 397.3 L481.0 392.0 L474.0 388.8 L456.9 371.7 L444.1 354.6 L429.9 334.7 L418.5 317.6 L409.9 303.3 L405.7 320.4 L401.4 343.2 L401.4 367.0 L408.0 380.0 L414.0 395.0 L419.0 415.0 L423.0 440.0 L427.5 465.0 L426.0 472.0 L420.0 478.0 L414.0 482.0 L413.0 500.0 L413.5 520.0 L417.0 535.0 L417.5 548.0 L415.0 556.0 L412.0 562.0 L411.5 590.0 L409.0 612.0 L407.0 625.0 L409.5 632.0 L414.0 642.0 L416.0 651.0 L414.5 657.0 L409.0 660.5 L400.0 661.0 L394.0 658.0 L390.5 650.0 L389.5 636.0 L387.0 622.0 L384.0 602.0 L380.0 575.0 L377.0 560.0 L372.5 553.0 L372.5 540.0 L376.0 524.0 L371.5 510.0 L368.0 498.0 L363.0 496.0 L360.0 504.0 L357.0 515.0 L352.5 522.0 L354.5 540.0 L354.5 552.0 L350.0 558.0 L347.0 566.0 L346.5 590.0 L344.0 612.0 L342.0 626.0 L341.5 636.0 L340.5 648.0 L338.0 656.0 L333.0 660.0 L324.0 661.0 L316.0 658.0 L312.5 651.0 L314.0 641.0 L319.0 633.0 L320.5 622.0 L318.5 600.0 L316.5 576.0 L315.5 563.0 L310.5 556.0 L311.0 545.0 L314.5 528.0 L315.0 512.0 L311.0 511.0 L310.5 480.0 L310.5 458.0 L303.0 448.0 L297.0 437.0 L293.5 430.0 L295.0 420.0 L300.0 409.0 L305.0 400.0 L310.2 393.7 L309.0 370.0 L309.0 331.0 L298.6 342.4 L280.7 360.3 L274.2 372.0 L256.2 387.3 L244.7 395.0 L240.0 402.0 L236.0 411.0 L233.0 419.4 L229.3 428.4 L227.0 424.0 L225.5 428.0 L224.0 431.0 L220.3 429.7 L219.8 419.4 L222.0 411.0 L225.4 404.0 L230.0 396.0 L235.7 388.6 L238.3 378.3 L252.4 363.0 L265.2 343.6 L278.0 332.0 L287.0 317.0 L294.8 303.8 L296.0 296.0 L297.5 284.0 L299.4 266.6 L308.0 262.5 L322.0 257.5 L338.0 252.5 L349.0 250.0 L352.0 246.0 L350.0 240.0 L347.0 233.0 L345.0 224.0 L342.0 217.0 L339.5 209.0 L338.5 202.0 L340.0 192.0 L344.0 184.0 L351.0 178.0z" fill="#8a8a8a"/><g clip-path="url(#cbody)"><path d="M322 257L349 250L380 252L410 259L428 268L436 300L410 303L402 342L330 342L324 312z" fill="#929292"/><path d="M356 258L362 268L368 276L374 268L380 258L384 300L380 342L356 342L352 300z" fill="#8c8c8c"/><path d="M339.7 258.3L351 254L359 268L372 300L382 342L370 342L360 306L346 272z" fill="#a2a2a2" stroke="#484848" stroke-width="0.8"/><path d="M382.5 256L391 262L378 286L362 310L356 306L372 278z" fill="#9a9a9a" stroke="#484848" stroke-width="0.8"/><path d="M333 296L341 294L350 338L342 340z" fill="#9c9c9c" stroke="#484848" stroke-width="0.8"/><path d="M332 330L396 287L402 295L339 339z" fill="#8a8a8a" stroke="#424242" stroke-width="1"/><path d="M334.4 332.6L398 290M337 336.4L400.6 293.6" stroke="#5c5c5c" stroke-width="0.6"/><circle cx="355.2" cy="321.4" r="1.1" fill="#3c3c3c"/><circle cx="371.2" cy="310.6" r="1.1" fill="#3c3c3c"/><circle cx="387.2" cy="299.7" r="1.1" fill="#3c3c3c"/><path d="M299.4 267.4L322 259.5L339.7 258.3L346 272L338 281L320 275z" fill="#a0a0a0"/><path d="M299.4 267.4L320 272.5L333 282L330 291.7L314 284L300.8 277z" fill="#8e8e8e" stroke="#454545" stroke-width="0.9"/><path d="M301 272L331 287" stroke="#5a5a5a" stroke-width="0.6"/><path d="M299.4 277.8L314 284L321 291.7L319 304.2L307.8 305.6L294.6 298.6z" fill="#7c7c7c" stroke="#454545" stroke-width="0.9"/><circle cx="338.3" cy="289" r="6.6" fill="#8c8c8c" stroke="#3e3e3e" stroke-width="1.1"/><circle cx="338.3" cy="289" r="3.6" fill="#7a7a7a" stroke="#555" stroke-width="0.7"/><circle cx="338.3" cy="289" r="1.1" fill="#4a4a4a"/><path d="M386 252L397 247.5L407.7 243.5L408.5 249L405.5 255L398 262L386 262z" fill="#484848"/><path d="M388 253L407 244.5" stroke="#8a8a8a" stroke-width="0.9"/><path d="M394 262L410 259L422.7 266.3L429.9 280.6L436 300L424 308L412 296L400 284z" fill="#848484"/><path d="M404 262C418 266 428 278 432 296M398 268C412 274 420 286 424 304M394 276C406 282 412 294 414 308" stroke="#404040" stroke-width="1.5" fill="none"/><path d="M405 260.4C419 264.4 429 276.4 433 294.4M399 266.4C413 272.4 421 284.4 425 302.4M395 274.4C407 280.4 413 292.4 415 306.4" stroke="#a4a4a4" stroke-width="0.8" fill="none"/><path d="M288 314L308 328M281 326L300 340M438 304L420 318M447 318L428 332" stroke="#5a5a5a" stroke-width="1.1" fill="none"/><path d="M330 342H402V367H330z" fill="#787878"/><path d="M330 345.5H402M330 352H402M330 363.5H402" stroke="#8c8c8c" stroke-width="0.9"/><path d="M330 357.5H402" stroke="#444" stroke-width="1"/><ellipse cx="366" cy="355" rx="9.5" ry="7" fill="#828282" stroke="#424242" stroke-width="1.2"/><ellipse cx="366" cy="355" rx="5" ry="3.6" fill="#666" stroke="#4a4a4a" stroke-width="0.7"/><circle cx="337" cy="353" r="3.4" fill="#7c7c7c" stroke="#484848" stroke-width="0.8"/><circle cx="395" cy="353" r="3.4" fill="#7c7c7c" stroke="#484848" stroke-width="0.8"/><path d="M330 367L402 367L414 395L423 440L427.5 465L420 478L312 482L310 387z" fill="#909090"/><path d="M384 367L400 370L410 470L398 476L390 440z" fill="#888888"/><path d="M402 430L425 424M336 440L360 452L356 482" stroke="#5a5a5a" stroke-width="0.9" fill="none"/><path d="M310 387L332 392L334 440C334 452 326 456 316 455L303 448L297 437L293.5 430L295 420L300 409z" fill="#868686" stroke="#4e4e4e" stroke-width="0.9"/><path d="M318 398L336 370L343 374L328 412z" fill="#565656"/><path d="M311 392C318 396 326 396 332 393" stroke="#4a4a4a" stroke-width="1" fill="none"/><path d="M311 476C340 486 384 484 427 464" stroke="#555" stroke-width="1.4" fill="none"/><path d="M311 471C340 481 384 479 426 459" stroke="#666" stroke-width="0.8" fill="none"/><path d="M352 480L372 480L368 498L360 504z" fill="#888"/><path d="M315 484L352 483L360 504L357 515L352.5 522L318 524L314.5 528z" fill="#8c8c8c"/><path d="M372 482L414 482L413.5 520L376 524L371.5 510L368 498z" fill="#8c8c8c"/><path d="M322 488C326 500 324 512 320 522M344 488C346 500 350 510 352 520M384 488C382 500 380 512 378 522M404 486C406 498 410 510 412 520" stroke="#6a6a6a" stroke-width="1" fill="none"/><path d="M318 526C324 517 346 517 352 526L350 548L335 556L318 548z" fill="#929292" stroke="#4a4a4a" stroke-width="1"/><path d="M321 538C328 544 342 544 349 538" stroke="#5a5a5a" stroke-width="0.9" fill="none"/><path d="M379 526C385 517 407 517 413 526L411 548L396 556L379 548z" fill="#929292" stroke="#4a4a4a" stroke-width="1"/><path d="M382 538C389 544 403 544 410 538" stroke="#5a5a5a" stroke-width="0.9" fill="none"/><path d="M310.5 556L311 545L316 526L318 548zM354.5 552L354.5 538L352 524L350 548zM372.5 553L372.5 540L378 524L379 548zM417.5 548L417 535L413 522L411 548z" fill="#606060"/><path d="M315.5 563L318 548L335 556L350 548L347 566L344 612L342 626L320.5 622L318.5 600z" fill="#8c8c8c"/><path d="M377 560L379 548L396 556L411 548L412 562L409 612L407 625L387 622L384 602z" fill="#8c8c8c"/><path d="M314 570L348 574M348 578L316 581M380 574L414 570M412 581L382 578" stroke="#505050" stroke-width="1.3" fill="none"/><path d="M314 584L348 588M348 592L316 595M380 588L414 584M412 595L382 592" stroke="#505050" stroke-width="1.3" fill="none"/><path d="M314 598L348 602M348 606L316 609M380 602L414 598M412 609L382 606" stroke="#505050" stroke-width="1.3" fill="none"/><path d="M314 612L348 616M348 620L316 623M380 616L414 612M412 623L382 620" stroke="#505050" stroke-width="1.3" fill="none"/><path d="M318 630L343 628L342 638L316 642zM388 628L410 630L414 642L390 638z" fill="#565656"/><path d="M314 641L341 637L340.5 648L338 656L333 660L324 661L316 658L312.5 651z" fill="#808080"/><path d="M389.5 637L413 641L416 651L414.5 657L409 660.5L400 661L394 658L390.5 650z" fill="#808080"/><path d="M265 343L281 360L274 372L256 387L238 378L252 363z" fill="#868686"/><path d="M258 352L272 366M250 364L264 378" stroke="#4c4c4c" stroke-width="1"/><path d="M256.2 387.3L244.7 395L235.7 388.6L238.3 378.3z" fill="#8e8e8e" stroke="#4e4e4e" stroke-width="0.7"/><path d="M465.5 343L444 355L457 372L474 389L488 376L475 360z" fill="#868686"/><path d="M472 352L458 366M481 364L467 378" stroke="#4c4c4c" stroke-width="1"/><path d="M474 388.8L488.2 397.3L496.8 390.2L492.5 380.2L488 376z" fill="#8e8e8e" stroke="#4e4e4e" stroke-width="0.7"/><path d="M358.0 176.0 L366.0 175.0 L373.0 178.0 L378.0 184.0 L383.0 192.0 L387.5 202.0 L390.0 212.0 L390.5 221.0 L388.0 230.0 L385.0 237.0 L380.0 243.0 L376.0 247.0 L379.0 252.0 L388.0 252.0 L397.0 247.5 L407.7 243.5 L408.5 249.0 L405.5 255.0 L410.0 259.0 L422.7 266.3 L429.9 280.6 L435.6 297.6 L442.7 311.9 L455.5 329.0 L465.5 343.2 L475.4 360.3 L488.2 376.0 L492.5 380.2 L496.8 390.2 L506.7 405.8 L512.4 420.0 L513.0 428.6 L509.6 431.5 L506.7 421.0 L505.2 425.0 L503.9 431.5 L501.0 424.0 L498.2 414.4 L497.0 419.0 L495.9 421.5 L494.5 415.0 L493.9 408.7 L488.2 397.3 L481.0 392.0 L474.0 388.8 L456.9 371.7 L444.1 354.6 L429.9 334.7 L418.5 317.6 L409.9 303.3 L405.7 320.4 L401.4 343.2 L401.4 367.0 L408.0 380.0 L414.0 395.0 L419.0 415.0 L423.0 440.0 L427.5 465.0 L426.0 472.0 L420.0 478.0 L414.0 482.0 L413.0 500.0 L413.5 520.0 L417.0 535.0 L417.5 548.0 L415.0 556.0 L412.0 562.0 L411.5 590.0 L409.0 612.0 L407.0 625.0 L409.5 632.0 L414.0 642.0 L416.0 651.0 L414.5 657.0 L409.0 660.5 L400.0 661.0 L394.0 658.0 L390.5 650.0 L389.5 636.0 L387.0 622.0 L384.0 602.0 L380.0 575.0 L377.0 560.0 L372.5 553.0 L372.5 540.0 L376.0 524.0 L371.5 510.0 L368.0 498.0 L363.0 496.0 L360.0 504.0 L357.0 515.0 L352.5 522.0 L354.5 540.0 L354.5 552.0 L350.0 558.0 L347.0 566.0 L346.5 590.0 L344.0 612.0 L342.0 626.0 L341.5 636.0 L340.5 648.0 L338.0 656.0 L333.0 660.0 L324.0 661.0 L316.0 658.0 L312.5 651.0 L314.0 641.0 L319.0 633.0 L320.5 622.0 L318.5 600.0 L316.5 576.0 L315.5 563.0 L310.5 556.0 L311.0 545.0 L314.5 528.0 L315.0 512.0 L311.0 511.0 L310.5 480.0 L310.5 458.0 L303.0 448.0 L297.0 437.0 L293.5 430.0 L295.0 420.0 L300.0 409.0 L305.0 400.0 L310.2 393.7 L309.0 370.0 L309.0 331.0 L298.6 342.4 L280.7 360.3 L274.2 372.0 L256.2 387.3 L244.7 395.0 L240.0 402.0 L236.0 411.0 L233.0 419.4 L229.3 428.4 L227.0 424.0 L225.5 428.0 L224.0 431.0 L220.3 429.7 L219.8 419.4 L222.0 411.0 L225.4 404.0 L230.0 396.0 L235.7 388.6 L238.3 378.3 L252.4 363.0 L265.2 343.6 L278.0 332.0 L287.0 317.0 L294.8 303.8 L296.0 296.0 L297.5 284.0 L299.4 266.6 L308.0 262.5 L322.0 257.5 L338.0 252.5 L349.0 250.0 L352.0 246.0 L350.0 240.0 L347.0 233.0 L345.0 224.0 L342.0 217.0 L339.5 209.0 L338.5 202.0 L340.0 192.0 L344.0 184.0 L351.0 178.0z" fill="url(#wire)"/><path d="M311 331L322 314L330 342L330 367L322 390L311 393z" fill="#6f6f6f"/><path d="M310 480L315.5 480L315 512L311 511z" fill="#6c6c6c"/><path d="M362 367L385 367L392 440L385 446L366 438z" fill="url(#gsash)"/><path d="M385 367L392 440" stroke="#4a4a4a" stroke-width="1"/><path d="M244.7 395L235.7 388.6L225 404L219.8 420L224 431L229 428L233 419L240 402z" fill="#7e7e7e"/><path d="M488 397L497 390L507 406L513 428L509 431L506 421L501 424L494 409z" fill="#7e7e7e"/><path d="M224 431L227 420M229.3 428.4L231 418M503.9 431.5L502 420M509.6 431.5L508 421" stroke="#4e4e4e" stroke-width="0.7"/><path d="M355 175.6L371 175.6L380 188.8L386.3 200L388 211L390.6 216L388.8 225L385 232.5L380 241L371 246L362.5 245L353.8 237.5L348.8 226L342.5 222.5L340 211L338.8 203.8L342.5 188.8L348.8 181z" fill="#6d6d6d"/><path d="M355 175.6L371 175.6L380 188.8L386.3 200L388 210L383 200L375 193L362 192L352 198L348 210L348.8 226L346 232L342.5 222.5L340 211L338.8 203.8L342.5 188.8L348.8 181z" fill="#676767"/><path d="M346 196C352 186 364 181 378 188M344 203C350 192 360 187 372 188M350 183C358 178 368 178 376 184" stroke="#8d8d8d" stroke-width="1.1" fill="none" opacity="0.8"/><path d="M343 206C345 198 349 193 354 191M347 214C347 205 350 199 355 196" stroke="#4c4c4c" stroke-width="1" fill="none" opacity="0.8"/><path d="M346 232L352 238L353 250L347 248z" fill="#7a7a7a"/><path d="M352 198L362 192L375 193L383 200L388 211L388.8 225L385 232.5L380 241L371 246L362.5 245L353.8 237.5L348.8 226L348 210z" fill="#727272"/><path d="M356 196L374 195L382 203L381 210L354 210z" fill="#7a7a7a"/><path d="M352 212C355 210 360 210 363 213L362 217C359 218 355 217 352 216zM373 213C376 210 382 210 385 212L384 216C381 217.5 376 217.5 373.5 216.5z" fill="#5c5c5c"/><path d="M366.5 213L365 224L363.8 227L367.5 229L371.5 227L370 224L369.5 213z" fill="#7e7e7e"/><path d="M363.8 227L367.5 229.4L371.5 227" stroke="#4e4e4e" stroke-width="1" fill="none"/><path d="M360.6 234.4C364 233 371 233 375 234.4" stroke="#505050" stroke-width="1.2" fill="none"/><path d="M362 236.6C365 238 370 238 373.5 236.6" stroke="#808080" stroke-width="0.9" fill="none"/><path d="M349 222L353.8 237.5L362.5 245L371 246L380 241L385 232.5L383 232L378 239L370 243L362 242L355 235z" fill="#5f5f5f" opacity="0.7"/><path d="M386.5 211C389.5 210 391 214 390.4 218L388.8 225L386.5 223z" fill="#7c7c7c"/><path d="M354 244L362.5 245L371 246L381 242L382.5 256L372 268L362 268L351 256z" fill="#747474"/><path d="M355 246L371 247L380 243" stroke="#4e4e4e" stroke-width="1.4" fill="none" opacity="0.8"/></g><path d="M364 366L369 362L487 421L490 426L484 427L366 371z" fill="#707070" stroke="#484848" stroke-width="0.7"/><path d="M372 368L486 424" stroke="#8c8c8c" stroke-width="0.7"/><path d="M398 376L408 372L424 394L414 402z" fill="#666" stroke="#444" stroke-width="0.7"/><path d="M452 403L456 398L464 402L460 407z" fill="#5e5e5e"/><path d="M358.0 176.0 L366.0 175.0 L373.0 178.0 L378.0 184.0 L383.0 192.0 L387.5 202.0 L390.0 212.0 L390.5 221.0 L388.0 230.0 L385.0 237.0 L380.0 243.0 L376.0 247.0 L379.0 252.0 L388.0 252.0 L397.0 247.5 L407.7 243.5 L408.5 249.0 L405.5 255.0 L410.0 259.0 L422.7 266.3 L429.9 280.6 L435.6 297.6 L442.7 311.9 L455.5 329.0 L465.5 343.2 L475.4 360.3 L488.2 376.0 L492.5 380.2 L496.8 390.2 L506.7 405.8 L512.4 420.0 L513.0 428.6 L509.6 431.5 L506.7 421.0 L505.2 425.0 L503.9 431.5 L501.0 424.0 L498.2 414.4 L497.0 419.0 L495.9 421.5 L494.5 415.0 L493.9 408.7 L488.2 397.3 L481.0 392.0 L474.0 388.8 L456.9 371.7 L444.1 354.6 L429.9 334.7 L418.5 317.6 L409.9 303.3 L405.7 320.4 L401.4 343.2 L401.4 367.0 L408.0 380.0 L414.0 395.0 L419.0 415.0 L423.0 440.0 L427.5 465.0 L426.0 472.0 L420.0 478.0 L414.0 482.0 L413.0 500.0 L413.5 520.0 L417.0 535.0 L417.5 548.0 L415.0 556.0 L412.0 562.0 L411.5 590.0 L409.0 612.0 L407.0 625.0 L409.5 632.0 L414.0 642.0 L416.0 651.0 L414.5 657.0 L409.0 660.5 L400.0 661.0 L394.0 658.0 L390.5 650.0 L389.5 636.0 L387.0 622.0 L384.0 602.0 L380.0 575.0 L377.0 560.0 L372.5 553.0 L372.5 540.0 L376.0 524.0 L371.5 510.0 L368.0 498.0 L363.0 496.0 L360.0 504.0 L357.0 515.0 L352.5 522.0 L354.5 540.0 L354.5 552.0 L350.0 558.0 L347.0 566.0 L346.5 590.0 L344.0 612.0 L342.0 626.0 L341.5 636.0 L340.5 648.0 L338.0 656.0 L333.0 660.0 L324.0 661.0 L316.0 658.0 L312.5 651.0 L314.0 641.0 L319.0 633.0 L320.5 622.0 L318.5 600.0 L316.5 576.0 L315.5 563.0 L310.5 556.0 L311.0 545.0 L314.5 528.0 L315.0 512.0 L311.0 511.0 L310.5 480.0 L310.5 458.0 L303.0 448.0 L297.0 437.0 L293.5 430.0 L295.0 420.0 L300.0 409.0 L305.0 400.0 L310.2 393.7 L309.0 370.0 L309.0 331.0 L298.6 342.4 L280.7 360.3 L274.2 372.0 L256.2 387.3 L244.7 395.0 L240.0 402.0 L236.0 411.0 L233.0 419.4 L229.3 428.4 L227.0 424.0 L225.5 428.0 L224.0 431.0 L220.3 429.7 L219.8 419.4 L222.0 411.0 L225.4 404.0 L230.0 396.0 L235.7 388.6 L238.3 378.3 L252.4 363.0 L265.2 343.6 L278.0 332.0 L287.0 317.0 L294.8 303.8 L296.0 296.0 L297.5 284.0 L299.4 266.6 L308.0 262.5 L322.0 257.5 L338.0 252.5 L349.0 250.0 L352.0 246.0 L350.0 240.0 L347.0 233.0 L345.0 224.0 L342.0 217.0 L339.5 209.0 L338.5 202.0 L340.0 192.0 L344.0 184.0 L351.0 178.0z" fill="none" stroke="#3e3e3e" stroke-width="0.9" stroke-opacity="0.75"/></svg>
<div class="a" style="left:0;top:0;width:619.5px;height:570.4px;background:radial-gradient(ellipse 78% 80% at 50% 58%,rgba(30,50,62,0) 58%,rgba(30,50,62,0.13) 100%)"></div>
<div class="a" style="left:0;top:0;width:619.5px;height:570.4px;background:linear-gradient(90deg,rgba(30,50,62,0.11) 0%,rgba(30,50,62,0.03) 14%,rgba(30,50,62,0) 30%,rgba(30,50,62,0) 70%,rgba(30,50,62,0.03) 86%,rgba(30,50,62,0.11) 100%)"></div>
<div class="t" style="left:73.8px;top:522.82px;font-size:10.61px;font-weight:bold;color:#b88686;transform:skewX(0deg) scaleX(1.270);transform-origin:0 100%;opacity:0.9">&ndash;</div>
<div class="t" style="left:85px;top:522.78px;font-size:10.89px;font-weight:bold;color:#b88686;transform:skewX(-35deg) scaleX(0.990);transform-origin:0 100%;opacity:0.9">1</div>
<div class="t" style="left:327.5px;top:523.62px;font-size:10.61px;font-weight:bold;color:#c08484;transform:skewX(0deg) scaleX(1.863);transform-origin:0 100%;opacity:0.9">0</div>
<div class="t" style="left:347.5px;top:535.84px;font-size:8.94px;font-weight:bold;color:#8c8cc4;transform:skewX(0deg) scaleX(3.218);transform-origin:0 100%;opacity:0.9">0</div>
<div class="t" style="left:572.5px;top:523.44px;font-size:12.01px;font-weight:bold;color:#b88686;transform:skewX(32deg) scaleX(0.898);transform-origin:0 100%;opacity:0.9">1</div>
<div class="t" style="left:341px;top:445.95px;font-size:5.03px;font-weight:bold;color:#7f86b8;transform:skewX(0deg) scaleX(1.908);transform-origin:0 100%;opacity:0.9">.1</div>
<svg style="left:7px;top:550px" width="14" height="14" viewBox="0 0 14 14"><path d="M3.6 10.4L4.6 2.6" stroke="#4cd84c" stroke-width="1"/><path d="M3.6 10.4L10 9.8" stroke="#e06a6a" stroke-width="1"/><path d="M3.6 10.4L2.2 11.8" stroke="#4a5ae0" stroke-width="1.2"/><circle cx="4.7" cy="2.2" r="1" fill="#4cd84c"/><circle cx="10.4" cy="9.6" r="0.9" fill="#e06a6a"/><circle cx="2.2" cy="11.8" r="1" fill="#3a4ae8"/></svg>
<svg style="left:5.600000000000001px;top:5.400000000000006px" width="12.4" height="12.4" viewBox="0 0 12.4 12.4"><circle cx="6.2" cy="6.2" r="5.5" fill="#f4f4f4" stroke="#3a3f44" stroke-width="1"/><circle cx="6.2" cy="6.2" r="3.6" fill="none" stroke="#c8c8c8" stroke-width="0.7"/><path d="M6.2 6.4L8.8 4.2" stroke="#222" stroke-width="0.9"/><path d="M4.4 3.4A3.6 3.6 0 0 1 9.6 5" stroke="#e02a2a" stroke-width="1.3" fill="none"/></svg>
<div class="t" style="left:23.200000000000003px;top:7px;font-size:8.2px;font-weight:bold;color:#fff;text-shadow:0 0 1.2px rgba(20,30,36,0.95),0.5px 0.7px 0.6px rgba(20,30,36,0.85);-webkit-text-stroke:0.25px #fff;transform:scaleX(0.8712);transform-origin:0 0">Time Shift</div>
<svg style="left:549.4px;top:3.4000000000000057px" width="8.4" height="8.4" viewBox="0 0 8.4 8.4"><circle cx="4.2" cy="4.2" r="3.7" fill="#58666f" stroke="#b4c0c8" stroke-width="0.7"/><rect x="2.7" y="3.8" width="3" height="2.5" rx="0.3" fill="#f4f4f4"/><path d="M3.3 3.8V3A0.9 0.9 0 0 1 5.1 3V3.8" stroke="#f4f4f4" stroke-width="0.6" fill="none"/></svg>
<div class="a" style="left:560.2px;top:3.299999999999997px;width:24.5px;height:8.6px;border-radius:4.3px;background:#56646e;border:0.7px solid #aebac2"></div>
<div class="t" style="left:563.8px;top:4.400000000000006px;font-size:6.6px;font-weight:bold;color:#f2f2f2;transform:scaleX(0.7850);transform-origin:0 0">Persp</div>
<svg style="left:578.9px;top:7.599999999999994px" width="2.4" height="2" viewBox="0 0 2.4 2"><path d="M0 0H2.4L1.2 2z" fill="#eee"/></svg>
<div class="a" style="left:586.8px;top:3.299999999999997px;width:28.90000000000009px;height:8.6px;border-radius:4.3px;background:#56646e;border:0.7px solid #aebac2"></div>
<div class="t" style="left:590.8px;top:4.400000000000006px;font-size:6.6px;font-weight:bold;color:#f2f2f2;transform:scaleX(0.7634);transform-origin:0 0">No cam</div>
<svg style="left:610.6999999999999px;top:7.599999999999994px" width="2.4" height="2" viewBox="0 0 2.4 2"><path d="M0 0H2.4L1.2 2z" fill="#eee"/></svg>
<div class="t" style="left:580px;top:560px;font-size:6px;font-weight:bold;color:#f2ee20;transform:scaleX(0.8612);transform-origin:0 0">Indie Edition</div>
</div>
<div class="a" style="left:639.5px;top:101px;width:12.5px;height:570px;background:#3a3a3a;"></div>
<div class="a" style="left:639.5px;top:101px;width:12.5px;height:6px;background:#2e2e2e;"></div>
<div class="a" style="left:640px;top:108px;width:11.5px;height:11px;background:#7d93b5;border-radius:1px"></div>
<svg style="left:640.2px;top:108.0px" width="11" height="11" viewBox="-6 -6 12 12"><path d="M-5 1L-1 -2.4L5 -0.6L1 3z" fill="#c9d3dc" stroke="#586674" stroke-width="0.6"/><path d="M-3 1L3 0M-1.6 -0.8L2 2" stroke="#586674" stroke-width="0.5"/><path d="M5.8 5.8L5.8 3.8L3.8 5.8z" fill="#aaa"/></svg>
<svg style="left:640.2px;top:121.0px" width="11" height="11" viewBox="-6 -6 12 12"><rect x="-4.4" y="-3.6" width="6.4" height="5.6" fill="none" stroke="#e6e6e6" stroke-width="0.8"/><path d="M-4.4 -3.6L2 2M-4 4.2L4.4 4.2L4.4 -2" stroke="#6fbf3c" stroke-width="1" fill="none"/><path d="M5.8 5.8L5.8 3.8L3.8 5.8z" fill="#aaa"/></svg>
<svg style="left:640.2px;top:133.5px" width="11" height="11" viewBox="-6 -6 12 12"><rect x="-3.2" y="-0.4" width="6.4" height="5" rx="0.6" fill="#f2f2f2"/><path d="M-1.9 -0.4V-2.6A1.9 1.9 0 0 1 1.9 -2.6V-1.6" fill="none" stroke="#f2f2f2" stroke-width="1.1"/></svg>
<svg style="left:640.2px;top:146.0px" width="11" height="11" viewBox="-6 -6 12 12"><circle cy="-1.4" r="3.2" fill="#3a3a3a" stroke="#e6e6e6" stroke-width="0.9"/><path d="M-1.4 1.6L0 5L1.4 1.6z" fill="#e6e6e6"/><circle cy="-1.4" r="1.2" fill="#e6e6e6"/><path d="M5.8 5.8L5.8 3.8L3.8 5.8z" fill="#aaa"/></svg>
<div class="a" style="left:640px;top:157.5px;width:11.5px;height:12.5px;background:#7d93b5;border-radius:1px"></div>
<svg style="left:640.2px;top:158.5px" width="11" height="11" viewBox="-6 -6 12 12"><circle r="4" fill="#eef1f3"/><path d="M-4 0A4 4 0 0 0 1.5 3.7A5 5 0 0 1 -2 -3.4A4 4 0 0 0 -4 0z" fill="#9aa6ae"/><path d="M5.8 5.8L5.8 3.8L3.8 5.8z" fill="#aaa"/></svg>
<svg style="left:640.2px;top:171.0px" width="11" height="11" viewBox="-6 -6 12 12"><circle cy="-1.6" r="2.8" fill="#3a3a3a" stroke="#f0e27a" stroke-width="0.9"/><path d="M-1.1 1.2H1.1V4.4H-1.1z" fill="#ddd"/><circle cy="-1.6" r="1" fill="#f0e27a"/><path d="M5.8 5.8L5.8 3.8L3.8 5.8z" fill="#aaa"/></svg>
<svg style="left:640.2px;top:183.5px" width="11" height="11" viewBox="-6 -6 12 12"><circle cy="-2" r="2.6" fill="#3a3a3a" stroke="#f0f0f0" stroke-width="0.9"/><path d="M-1 0.6H1V2.6H-1z" fill="#ddd"/><ellipse cy="4" rx="4.4" ry="1.4" fill="none" stroke="#ddd" stroke-width="0.7"/><path d="M5.8 5.8L5.8 3.8L3.8 5.8z" fill="#aaa"/></svg>
<div class="a" style="left:640px;top:196px;width:11.5px;height:12px;background:#7d93b5;border-radius:1px"></div>
<svg style="left:640.2px;top:196.5px" width="11" height="11" viewBox="-6 -6 12 12"><circle r="4.2" fill="#16181a" stroke="#dfe6ee" stroke-width="0.8"/><path d="M0 0L0 -4.2A4.2 4.2 0 0 1 4.2 0zM0 0L0 4.2A4.2 4.2 0 0 1 -4.2 0z" fill="#e9edf2"/><path d="M5.8 5.8L5.8 3.8L3.8 5.8z" fill="#aaa"/></svg>
<svg style="left:640.2px;top:208.5px" width="11" height="11" viewBox="-6 -6 12 12"><path d="M-4.6 -3.4L0 -1.4M-4.6 -0.6L2 2.2M-2 2.2L4 4.4" stroke="#d8d8d8" stroke-width="1"/><circle cx="-3.4" cy="-3" r="0.9" fill="#eee"/><path d="M5.8 5.8L5.8 3.8L3.8 5.8z" fill="#aaa"/></svg>
<svg style="left:640.2px;top:221.0px" width="11" height="11" viewBox="-6 -6 12 12"><rect x="-4.6" y="-1" width="5.4" height="5" fill="#e4e4e4"/><path d="M-2.4 -1V-3.6H2.4" stroke="#e4e4e4" stroke-width="0.9" fill="none"/><path d="M1.6 -1.6L5 0.8L1.6 3z" fill="#f2f2f2"/><path d="M5.8 5.8L5.8 3.8L3.8 5.8z" fill="#aaa"/></svg>
<svg style="left:640.2px;top:235.5px" width="11" height="11" viewBox="-6 -6 12 12"><circle r="1.3" fill="#f4f4f4"/></svg>
<svg style="left:640.2px;top:248.0px" width="11" height="11" viewBox="-6 -6 12 12"><path d="M3.6 -3.6L-2 2" stroke="#eee" stroke-width="1.1"/><path d="M-4.4 4.4L-3.6 1L-1 3.6z" fill="#ddd"/></svg>
<svg style="left:640.2px;top:259.0px" width="11" height="11" viewBox="-6 -6 12 12"><path d="M3.6 -4L-2.6 2.4" stroke="#eee" stroke-width="1.3"/><circle cx="-3.4" cy="3.6" r="1.1" fill="#ddd"/></svg>
<svg style="left:640.2px;top:270.5px" width="11" height="11" viewBox="-6 -6 12 12"><circle cx="-3" cy="3" r="1.5" fill="#eee"/><text x="-1" y="1" font-size="6.5" font-weight="bold" fill="#f2f2f2" font-family="Liberation Sans,sans-serif">12</text></svg>
<svg style="left:640.2px;top:282.0px" width="11" height="11" viewBox="-6 -6 12 12"><path d="M-4.4 1L-0.6 -2.4L4.2 0L0.4 3.6z" fill="#e8e8e8"/><path d="M-4.4 1V3L0.4 5.4V3.6z" fill="#9a9a9a"/><path d="M1 -4.6L2.4 -1.6" stroke="#eee" stroke-width="0.9"/></svg>
<svg style="left:640.2px;top:295.0px" width="11" height="11" viewBox="-6 -6 12 12"><path d="M-4.4 0.4L-0.6 -2.6L4.2 -0.4L0.4 3z" fill="#e8e8e8"/><path d="M-4.4 0.4V2.6L0.4 5V3z" fill="#9a9a9a"/><text x="1.4" y="-1.6" font-size="4.6" fill="#eee" font-family="Liberation Sans,sans-serif">12</text></svg>
<svg style="left:640.2px;top:309.0px" width="11" height="11" viewBox="-6 -6 12 12"><path d="M-4.4 5V-4.4H5" stroke="#d8d8d8" stroke-width="1" fill="none"/><path d="M-4.4 5L-1 -4.4" stroke="#888" stroke-width="0.6"/></svg>
<div class="a" style="left:640px;top:325px;width:11.5px;height:12px;background:#7d93b5;border-radius:1px"></div>
<svg style="left:640.2px;top:325.5px" width="11" height="11" viewBox="-6 -6 12 12"><path d="M-4.4 4L3.4 -3.8" stroke="#f4f4f4" stroke-width="1.6"/><path d="M-4.6 4.6L0 3.6L-3.4 0.4z" fill="#f4f4f4"/></svg>
<svg style="left:640.2px;top:338.0px" width="11" height="11" viewBox="-6 -6 12 12"><rect x="-4.2" y="-4.2" width="8.4" height="8.4" fill="#e4e8ec"/><path d="M-2.6 -2.6L2.6 2.6M2.6 -2.6L-2.6 2.6" stroke="#d86a6a" stroke-width="0.7"/><rect x="-1.4" y="-1.4" width="2.8" height="2.8" fill="#7aa0d8"/><rect x="-4.2" y="-4.2" width="8.4" height="8.4" fill="none" stroke="#f6f6f6" stroke-width="0.7"/><path d="M5.8 5.8L5.8 3.8L3.8 5.8z" fill="#aaa"/></svg>
<svg style="left:640.2px;top:350.5px" width="11" height="11" viewBox="-6 -6 12 12"><path d="M0 -4.4L5 0L0 4.4L-5 0z" fill="#4d8fd6"/><path d="M0 -2.2L2.6 0L0 2.2L-2.6 0z" fill="#dfeaf8"/></svg>
<svg style="left:640.2px;top:362.5px" width="11" height="11" viewBox="-6 -6 12 12"><rect x="-4.4" y="-3.6" width="8.8" height="7.2" rx="1" fill="#7cc67c"/><rect x="-2.6" y="-1.8" width="5.2" height="3.6" fill="#e6f6e6"/></svg>
<svg style="left:640.2px;top:375.5px" width="11" height="11" viewBox="-6 -6 12 12"><path d="M0 0L-4 3.6M0 0L4.4 1.6M0 0L0.6 -4.6" stroke="#e8e8e8" stroke-width="1"/><circle r="1.2" fill="#e8e8e8"/></svg>
<svg style="left:640.2px;top:388.5px" width="11" height="11" viewBox="-6 -6 12 12"><circle r="4.2" fill="#3a3a3a" stroke="#e8e8e8" stroke-width="0.9"/><rect x="-1.8" y="-1.8" width="3.6" height="3.6" fill="#e8e8e8"/></svg>
<div class="a" style="left:640px;top:400px;width:11.5px;height:13px;background:#7d93b5;border-radius:1px"></div>
<svg style="left:639.95px;top:400.75px" width="11.5" height="11.5" viewBox="-6 -6 12 12"><rect x="-4.4" y="-4" width="8.8" height="8" fill="#f0f0f0"/><path d="M-3.4 3.4V0.4H3.4V3.4M-2 0.4A2 2 0 0 1 2 0.4z" fill="#333" stroke="#333" stroke-width="0.6"/></svg>
<div class="a" style="left:640px;top:418.5px;width:11.5px;height:12.5px;background:#7d93b5;border-radius:1px"></div>
<svg style="left:640.2px;top:419.1px" width="11" height="11" viewBox="-6 -6 12 12"><path d="M0 5L-2.8 0.2A3.3 3.3 0 1 1 2.8 0.2z" fill="#f2f2f2"/><circle cy="-1.6" r="1.3" fill="#7d93b5"/></svg>
<svg style="left:641px;top:637.5px" width="9" height="9" viewBox="0 0 9 9"><circle cx="4.5" cy="4.5" r="3.9" fill="#2a2a2a" stroke="#e8e8e8" stroke-width="0.8"/><path d="M4.9 2.2L4.1 6.8" stroke="#fff" stroke-width="1"/></svg>
<div class="a" style="left:640.6px;top:648.2px;width:10.4px;height:10.4px;background:#7d93b5;"></div>
<svg style="left:642px;top:649.6px" width="8" height="8" viewBox="0 0 8 8"><path d="M0.4 0.4H3.4V3.4H0.4zM4.6 0.4H7.6V3.4H4.6zM0.4 4.6H3.4V7.6H0.4zM4.6 4.6H7.6V7.6H4.6z" fill="#f5e23a"/></svg>
<div class="a" style="left:640.8px;top:660.4px;width:10px;height:9.6px;background:#f2f2f2;"></div>
<svg style="left:642px;top:661.6px" width="8" height="8" viewBox="0 0 8 8"><path d="M0.6 3A3.4 2 0 0 1 7.4 3L6 3.6H2z" fill="#222"/><path d="M1.6 4.4H6.4V7H1.6z" fill="#222"/><circle cx="4" cy="5.2" r="1" fill="#f2f2f2"/></svg>
<div class="a" style="left:655px;top:100px;width:625px;height:571px;background:#303030;"></div>
<div class="t" style="left:830px;top:105.5px;font-size:10.4px;color:#414141;transform:scaleX(0.9958);transform-origin:0 0;">Indie Edition</div>
<div class="t" style="left:1002.5px;top:106.5px;font-size:11px;color:#4e4e4e;transform:scaleX(1.0613);transform-origin:0 0;font-weight:bold;">Geometry</div>
<svg style="left:0;top:0" width="1280" height="720" viewBox="0 0 1280 720"><defs><clipPath id="cnet"><rect x="655" y="100" width="625" height="571"/></clipPath><pattern id="nstripe" width="2.4" height="4" patternUnits="userSpaceOnUse"><rect width="2.4" height="4" fill="#e4e4e4"/><rect x="0" width="1" height="4" fill="#bdbdbd"/></pattern></defs><g clip-path="url(#cnet)"><path d="M1044.2 100V116M1044.2 124V155M1044.2 173V193M1044.2 205V221" stroke="#4a76b8" stroke-width="1.3" fill="none"/><path d="M1044.4 234C1044.4 239 1040 240.6 1034 240.6H982C976 240.6 972 243 970 247" stroke="#4a76b8" stroke-width="1.1" fill="none"/><path d="M1044.4 234C1044.4 239 1049 241.6 1055 241.6H1190C1198 241.6 1203 246 1203 253" stroke="#4a76b8" stroke-width="1.1" fill="none"/><path d="M969 267V280" stroke="#8a8a8a" stroke-width="1.1" fill="none"/><path d="M969 281C969 286 965 288.5 958 288.5H655" stroke="#4a76b8" stroke-width="1.1" fill="none"/><path d="M676.6 376C676.6 324.0 708.3 288.5 752 288.5" stroke="#5b7fb3" stroke-width="1.0" fill="none"/><path d="M742.6 376C742.6 324.0 772.6 288.5 814 288.5" stroke="#5b7fb3" stroke-width="1.0" fill="none"/><path d="M808.7 376C808.7 324.0 837.0 288.5 876 288.5" stroke="#6d85a8" stroke-width="1.0" fill="none"/><path d="M874.8 376C874.8 324.0 891.3 288.5 914 288.5" stroke="#4f82d0" stroke-width="1.3" fill="none"/><path d="M655 299.5C664 293 676 288.5 690 288.5" stroke="#6d85a8" stroke-width="1" fill="none"/><path d="M655 282.6H958M655 292.6H930" stroke="#3a4352" stroke-width="0.7" fill="none" opacity="0.5"/></g></svg>
<svg style="left:0;top:0" width="1280" height="720" viewBox="0 0 1280 720"><rect x="662.5" y="377.6" width="28.600000000000023" height="10.099999999999966" rx="1.6" fill="#e6e6e6" stroke="#1c1c1c" stroke-width="0.9"/><rect x="664.1" y="378.8" width="25.400000000000023" height="7.6999999999999655" fill="url(#nstripe)"/><rect x="672.4" y="378.40000000000003" width="8.8" height="8.499999999999966" fill="#ececec"/><path d="M673.4 385.65L675.3 379.65H678.3L680.1999999999999 385.65z" fill="#f08a28"/><path d="M674.5 383.04999999999995L675.5 379.65H678.0999999999999L679.0999999999999 383.04999999999995z" fill="#e0452a"/><circle cx="676.6" cy="376.4" r="1.3" fill="#f2f2f2"/><circle cx="676.6" cy="389.6" r="1.3" fill="#f2f2f2"/><circle cx="696.0" cy="389.5" r="1.7" fill="#2e2e2e" stroke="#6f8f4c" stroke-width="0.8"/><rect x="728.6" y="377.6" width="28.600000000000023" height="10.099999999999966" rx="1.6" fill="#e6e6e6" stroke="#1c1c1c" stroke-width="0.9"/><rect x="730.2" y="378.8" width="25.400000000000023" height="7.6999999999999655" fill="url(#nstripe)"/><rect x="738.5000000000001" y="378.40000000000003" width="8.8" height="8.499999999999966" fill="#ececec"/><path d="M739.5000000000001 385.65L741.4000000000001 379.65H744.4000000000001L746.3000000000001 385.65z" fill="#f08a28"/><path d="M740.6000000000001 383.04999999999995L741.6000000000001 379.65H744.2L745.2 383.04999999999995z" fill="#e0452a"/><circle cx="742.7" cy="376.4" r="1.3" fill="#f2f2f2"/><circle cx="742.7" cy="389.6" r="1.3" fill="#f2f2f2"/><circle cx="762.1" cy="389.5" r="1.7" fill="#2e2e2e" stroke="#6f8f4c" stroke-width="0.8"/><rect x="794.7" y="377.6" width="28.600000000000023" height="10.099999999999966" rx="1.6" fill="#e6e6e6" stroke="#1c1c1c" stroke-width="0.9"/><rect x="796.3000000000001" y="378.8" width="25.400000000000023" height="7.6999999999999655" fill="url(#nstripe)"/><rect x="804.6" y="378.40000000000003" width="8.8" height="8.499999999999966" fill="#ececec"/><path d="M805.6 385.65L807.5 379.65H810.5L812.4 385.65z" fill="#f08a28"/><path d="M806.7 383.04999999999995L807.7 379.65H810.3L811.3 383.04999999999995z" fill="#e0452a"/><circle cx="808.8000000000001" cy="376.4" r="1.3" fill="#f2f2f2"/><circle cx="808.8000000000001" cy="389.6" r="1.3" fill="#f2f2f2"/><circle cx="828.2" cy="389.5" r="1.7" fill="#2e2e2e" stroke="#6f8f4c" stroke-width="0.8"/><rect x="860.8" y="377.6" width="28.600000000000023" height="10.099999999999966" rx="1.6" fill="#e6e6e6" stroke="#1c1c1c" stroke-width="0.9"/><rect x="862.4" y="378.8" width="25.400000000000023" height="7.6999999999999655" fill="url(#nstripe)"/><rect x="870.6999999999999" y="378.40000000000003" width="8.8" height="8.499999999999966" fill="#ececec"/><path d="M871.6999999999999 385.65L873.5999999999999 379.65H876.5999999999999L878.4999999999999 385.65z" fill="#f08a28"/><path d="M872.8 383.04999999999995L873.8 379.65H876.3999999999999L877.3999999999999 383.04999999999995z" fill="#e0452a"/><circle cx="874.9" cy="376.4" r="1.3" fill="#f2f2f2"/><circle cx="874.9" cy="389.6" r="1.3" fill="#f2f2f2"/><circle cx="894.3" cy="389.5" r="1.7" fill="#2e2e2e" stroke="#6f8f4c" stroke-width="0.8"/><rect x="1189" y="255" width="28.59999999999991" height="9.600000000000023" rx="1.6" fill="#e6e6e6" stroke="#1c1c1c" stroke-width="0.9"/><rect x="1190.6" y="256.2" width="25.39999999999991" height="7.200000000000022" fill="url(#nstripe)"/><rect x="1198.8999999999999" y="255.8" width="8.8" height="8.000000000000023" fill="#ececec"/><path d="M1199.8999999999999 262.8L1201.8 256.8H1204.8L1206.7 262.8z" fill="#f08a28"/><path d="M1201.0 260.2L1202.0 256.8H1204.6L1205.6 260.2z" fill="#e0452a"/><circle cx="1203.2" cy="253.6" r="1.3" fill="#f2f2f2"/><circle cx="1203.2" cy="266.4" r="1.3" fill="#f2f2f2"/><circle cx="1222.5" cy="266.5" r="1.7" fill="#2e2e2e" stroke="#6f8f4c" stroke-width="0.8"/><rect x="1030" y="116" width="28.59999999999991" height="8.400000000000006" rx="1.6" fill="#e6e6e6" stroke="#1c1c1c" stroke-width="0.9"/><rect x="1031.6" y="117.2" width="25.39999999999991" height="6.000000000000005" fill="url(#nstripe)"/><rect x="1039.8999999999999" y="116.8" width="8.8" height="6.800000000000006" fill="#ececec"/><path d="M1040.8999999999999 119.0H1046.8999999999999M1041.7 121.8H1047.7M1044.7 117.2V123.2" stroke="#2f6fd0" stroke-width="1.3"/><circle cx="1044.2" cy="113.6" r="1.3" fill="#f2f2f2"/><circle cx="1044.2" cy="126.6" r="1.3" fill="#f2f2f2"/><circle cx="1063" cy="126.4" r="1.5" fill="none" stroke="#9a9a4c" stroke-width="0.7"/><path d="M1061.6 100.4L1062.8 98.6L1064 100.4M1062 105.6L1064.4 107.2L1062 108.8z" stroke="#5a8fd8" stroke-width="0.7" fill="none"/><g transform="translate(1044.3,163.8)"><g stroke="#1a1a1a" stroke-width="6.6" stroke-linecap="round"><path d="M-7 -4.6L7 4.6M-7 4.6L7 -4.6"/></g><g stroke="#b4d0e8" stroke-width="5" stroke-linecap="round"><path d="M-7 -4.6L7 4.6M-7 4.6L7 -4.6"/></g><circle r="2.6" fill="none" stroke="#8fb0cc" stroke-width="0.7"/><circle cx="-5" cy="-3.3" r="1.2" fill="none" stroke="#8fb0cc" stroke-width="0.5"/><circle cx="5" cy="3.3" r="1.2" fill="none" stroke="#8fb0cc" stroke-width="0.5"/><circle cx="-5" cy="3.3" r="1.2" fill="none" stroke="#8fb0cc" stroke-width="0.5"/><circle cx="5" cy="-3.3" r="1.2" fill="none" stroke="#8fb0cc" stroke-width="0.5"/></g><circle cx="1044.2" cy="154.8" r="1.3" fill="#f2f2f2"/><circle cx="1044.2" cy="173" r="1.3" fill="#f2f2f2"/><circle cx="1060" cy="170.4" r="1.7" fill="#2e2e2e" stroke="#6f8f4c" stroke-width="0.8"/><path d="M1032.6 194.4H1056L1059.4 199.2L1056 204H1032.6L1029.4 199.2z" fill="#e6e6e6" stroke="#1c1c1c" stroke-width="0.9"/><rect x="1034" y="195.6" width="20.6" height="7.2" fill="url(#nstripe)"/><rect x="1039.8" y="195" width="8.8" height="8.4" fill="#ececec"/><rect x="1041.4" y="196.2" width="5.6" height="6" fill="#e8b030"/><path d="M1041.4 199.2H1047.0M1044.2 196.2V202.2" stroke="#3a6ab0" stroke-width="1"/><circle cx="1044.2" cy="192.6" r="1.3" fill="#f2f2f2"/><circle cx="1044.2" cy="205.6" r="1.3" fill="#f2f2f2"/><circle cx="1065" cy="205.8" r="1.7" fill="#2e2e2e" stroke="#6f8f4c" stroke-width="0.8"/><path d="M1032.8 222.2H1056L1059.4 231.4H1029.4z" fill="#e6e6e6" stroke="#1c1c1c" stroke-width="0.9"/><path d="M1034.4 223.4H1054.6L1057 230.2H1032z" fill="url(#nstripe)"/><rect x="1039.8" y="222.8" width="8.8" height="8" fill="#ececec"/><path d="M1042.8000000000002 223.60000000000002C1047.8000000000002 223.60000000000002 1048.0 228.0 1044.8000000000002 229.8L1042.4 229.8z" fill="#f07a20"/><path d="M1041.8000000000002 224.8V229.8" stroke="#e0b090" stroke-width="1"/><circle cx="1044.4" cy="220.3" r="1.3" fill="#f2f2f2"/><circle cx="1044.4" cy="233.5" r="1.3" fill="#f2f2f2"/><circle cx="1064.8" cy="233.5" r="1.7" fill="#2e2e2e" stroke="#6f8f4c" stroke-width="0.8"/><circle cx="969" cy="254" r="13.4" fill="#4f7ecb"/><circle cx="969" cy="254" r="13.4" fill="none" stroke="#3a62a8" stroke-width="0.8"/><circle cx="969" cy="254" r="8.2" fill="#a585e0"/><circle cx="969" cy="247.4" r="1.2" fill="#efe3b8"/><circle cx="969" cy="260.8" r="1.2" fill="#efe3b8"/><rect x="954.4" y="249.2" width="29.200000000000045" height="10.0" rx="1.6" fill="#e6e6e6" stroke="#e09078" stroke-width="0.9"/><rect x="956.0" y="250.39999999999998" width="26.000000000000046" height="7.6" fill="url(#nstripe)"/><rect x="964.6" y="250.0" width="8.8" height="8.4" fill="#ececec"/><circle cx="969.0" cy="254.2" r="2.9" fill="#fafafa" stroke="#3a3a3a" stroke-width="0.8"/><path d="M969.0 254.2L970.8 252.79999999999998" stroke="#d82a2a" stroke-width="0.9"/><path d="M966.8 255.6A2.6 2.6 0 0 0 970.4 256.4" stroke="#d82a2a" stroke-width="0.9" fill="none"/><rect x="978.8" y="250.2" width="4" height="8" rx="0.8" fill="#2a98f0"/><circle cx="969" cy="280.3" r="2.4" fill="#dcdcdc" stroke="#6a6a6a" stroke-width="0.6"/><circle cx="969" cy="280.3" r="0.9" fill="#b0b0b0"/></svg>
<div class="t" style="left:693px;top:379.2px;font-size:6.7px;color:#cfcfcf;transform:scaleX(0.8794);transform-origin:0 0;">blast10</div>
<div class="t" style="left:759px;top:379.2px;font-size:6.7px;color:#cfcfcf;transform:scaleX(0.9229);transform-origin:0 0;">blast7</div>
<div class="t" style="left:825.2px;top:379.2px;font-size:6.7px;color:#cfcfcf;transform:scaleX(0.9396);transform-origin:0 0;">blast9</div>
<div class="t" style="left:891.2px;top:379.2px;font-size:6.7px;color:#cfcfcf;transform:scaleX(0.9396);transform-origin:0 0;">blast8</div>
<div class="t" style="left:1219.4px;top:255.9px;font-size:6.7px;color:#cfcfcf;transform:scaleX(0.8725);transform-origin:0 0;">blast1</div>
<div class="t" style="left:1062px;top:223.6px;font-size:6.7px;color:#cfcfcf;transform:scaleX(0.8717);transform-origin:0 0;">convert1</div>
<div class="t" style="left:1062px;top:196px;font-size:6.7px;color:#cfcfcf;transform:scaleX(0.8132);transform-origin:0 0;">unpack1</div>
<div class="t" style="left:986px;top:250.8px;font-size:6.7px;color:#e4e4e4;transform:scaleX(0.9068);transform-origin:0 0;">timeshift1</div>
<div class="t" style="left:1057.6px;top:154px;font-size:6.7px;color:#6a6a6a;transform:scaleX(0.7278);transform-origin:0 0;">Null</div>
<div class="t" style="left:1057.6px;top:161px;font-size:6.7px;color:#d8d8d8;transform:scaleX(0.7735);transform-origin:0 0;">import</div>
<div class="t" style="left:1061px;top:116.4px;font-size:6.7px;color:#bdbdbd;transform:scaleX(0.7380);transform-origin:0 0;">bgeo</div>
<div class="a" style="left:655px;top:390px;width:625px;height:30px;overflow:hidden">
<div class="t" style="left:-49px;top:11px;font-size:5.9px;color:#5590e2;transform:scaleX(0.8483);transform-origin:0 0;">@path=/beltDecorMetalLow/beltDecorMetalLo</div>
<div class="t" style="left:0.5px;top:17.80000000000001px;font-size:5.9px;color:#5590e2;transform:scaleX(0.8325);transform-origin:0 0;">wShape,/beltGems</div>
<div class="t" style="left:38px;top:3.3999999999999773px;font-size:5.9px;color:#5590e2;transform:scaleX(0.9755);transform-origin:0 0;">not:</div>
<div class="t" style="left:104px;top:3.3999999999999773px;font-size:5.9px;color:#5590e2;transform:scaleX(0.9755);transform-origin:0 0;">not:</div>
<div class="t" style="left:170.20000000000005px;top:3.3999999999999773px;font-size:5.9px;color:#5590e2;transform:scaleX(0.9755);transform-origin:0 0;">not:</div>
<div class="t" style="left:236.20000000000005px;top:3.3999999999999773px;font-size:5.9px;color:#5590e2;transform:scaleX(0.9755);transform-origin:0 0;">not:</div>
<div class="t" style="left:38px;top:11px;font-size:5.9px;color:#5590e2;transform:scaleX(0.9225);transform-origin:0 0;">@path=/pauldronMetal/pauldron</div>
<div class="t" style="left:38px;top:17.80000000000001px;font-size:5.9px;color:#5590e2;transform:scaleX(0.8944);transform-origin:0 0;">MetalShape,/pauldronPadding</div>
<div class="t" style="left:104px;top:11px;font-size:5.9px;color:#5590e2;transform:scaleX(0.8157);transform-origin:0 0;">@path=/sidePanelsLeather/sidePan</div>
<div class="t" style="left:104px;top:17.80000000000001px;font-size:5.9px;color:#5590e2;transform:scaleX(0.9302);transform-origin:0 0;">elsLeatherShape</div>
<div class="t" style="left:170.20000000000005px;top:11px;font-size:5.9px;color:#5590e2;transform:scaleX(0.8648);transform-origin:0 0;">@path=/shoulderArmour/shoulder</div>
<div class="t" style="left:170.20000000000005px;top:17.80000000000001px;font-size:5.9px;color:#5590e2;transform:scaleX(0.8388);transform-origin:0 0;">ArmourShape,/shoulderArmourP</div>
<div class="t" style="left:236.20000000000005px;top:11px;font-size:5.9px;color:#5590e2;transform:scaleX(0.8998);transform-origin:0 0;">@path=/bagGem/bagGemShape,/</div>
<div class="t" style="left:236.20000000000005px;top:17.80000000000001px;font-size:5.9px;color:#5590e2;transform:scaleX(0.9211);transform-origin:0 0;">bagLeather/bagLeatherShape,/b...</div>
</div>
<div class="t" style="left:1219.4px;top:270.2px;font-size:6.2px;color:#5590e2;transform:scaleX(0.9300);transform-origin:0 0;">@path=/body/bodyShape,/</div>
<div class="t" style="left:1219.4px;top:277.3px;font-size:6.2px;color:#5590e2;transform:scaleX(0.9300);transform-origin:0 0;">s/earringsShape,/eyeBalls/e</div>
<div class="t" style="left:1219.4px;top:284.3px;font-size:6.2px;color:#5590e2;transform:scaleX(0.9300);transform-origin:0 0;">sShape,/eyePupils/eyePupil</div>
<svg style="left:977.5px;top:308.5px" width="23" height="23" viewBox="-11.5 -11.5 23 23"><g fill="#fff" stroke="#111" stroke-width="1.1" stroke-linejoin="round"><path d="M0 -10L3.8 -5.6H1.5V-3H-1.5V-5.6H-3.8z"/><path d="M0 10L3.8 5.6H1.5V3H-1.5V5.6H-3.8z"/><path d="M-10 0L-5.6 -3.8V-1.5H-3V1.5H-5.6V3.8z"/><path d="M10 0L5.6 -3.8V-1.5H3V1.5H5.6V3.8z"/></g></svg>
<div class="a" style="left:1064.5px;top:100.5px;width:215.5px;height:97.5px;background:#3b3b3b;"></div>
<div class="a" style="left:1064.5px;top:100.5px;width:215.5px;height:11px;background:#3a3a3a;"></div>
<div class="a" style="left:1064.5px;top:111.5px;width:215.5px;height:14px;background:#3e3e3e;"></div>
<div class="a" style="left:1064.5px;top:125.2px;width:215.5px;height:1px;background:#2c2c2c;"></div>
<svg style="left:1067.2px;top:100.8px" width="10" height="10" viewBox="0 0 10 10"><circle cx="4.6" cy="4.6" r="4.1" fill="#f4f4f4" stroke="#3a3a3a" stroke-width="0.8"/><circle cx="4.6" cy="4.6" r="3" fill="none" stroke="#c8c8c8" stroke-width="0.6"/><path d="M4.6 4.6L6.8 3" stroke="#d82a2a" stroke-width="0.9"/><path d="M2 6.2A3 3 0 0 0 6.4 7" stroke="#d82a2a" stroke-width="0.9" fill="none"/><path d="M7.6 9.6L9.6 9.6L9.6 7.8z" fill="#ccc"/></svg>
<div class="t" style="left:1078.2px;top:102.4px;font-size:7px;color:#f4f4f4;transform:scaleX(0.7772);transform-origin:0 0;font-weight:bold;">Time Shift</div>
<div class="a" style="left:1107.2px;top:101px;width:105.6px;height:9px;background:#131313;"></div>
<div class="t" style="left:1109px;top:102.6px;font-size:7.2px;color:#eeeeee;transform:scaleX(0.8101);transform-origin:0 0;font-family:'Liberation Mono',monospace;">timeshift1</div>
<svg style="left:1215.1px;top:99.9px" width="11" height="11" viewBox="-6 -6 12 12"><path d="M2.60 0.00L5.00 0.00M1.84 1.84L3.54 3.54M0.00 2.60L0.00 5.00M-1.84 1.84L-3.54 3.54M-2.60 0.00L-5.00 0.00M-1.84 -1.84L-3.54 -3.54M-0.00 -2.60L-0.00 -5.00M1.84 -1.84L3.54 -3.54" stroke="#f2f2f2" stroke-width="1.5"/><circle r="2.9" fill="#f2f2f2"/><circle r="1.2" fill="#3a3a3a"/><path d="M5.8 5.8V4L4 5.8z" fill="#bbb"/></svg>
<svg style="left:1228.9px;top:99.9px" width="11" height="11" viewBox="-6 -6 12 12"><path d="M-5 2.4C-2 3.4 1 1.6 2.4 -0.8L4.4 0.4C2.6 4 -2 5.6 -5 2.4z" fill="#d8d8d8"/><path d="M2.6 -1.2L5 -5" stroke="#eee" stroke-width="1.2"/><path d="M5.8 5.8V4L4 5.8z" fill="#bbb"/></svg>
<svg style="left:1241.1px;top:99.9px" width="11" height="11" viewBox="-6 -6 12 12"><circle cx="-1" cy="-1" r="3.4" fill="#555" stroke="#f2f2f2" stroke-width="1"/><path d="M1.6 1.6L5 5" stroke="#f2f2f2" stroke-width="1.5"/></svg>
<svg style="left:1254.1px;top:99.9px" width="11" height="11" viewBox="-6 -6 12 12"><circle r="4.4" fill="#2a2a2a" stroke="#f2f2f2" stroke-width="0.9"/><path d="M0.5 -2.6L-0.5 2.8" stroke="#fff" stroke-width="1.1"/></svg>
<svg style="left:1267.1px;top:99.9px" width="11" height="11" viewBox="-6 -6 12 12"><circle r="4.4" fill="#2a2a2a" stroke="#f2f2f2" stroke-width="0.9"/><text x="0" y="2.5" font-size="6.6" font-weight="bold" text-anchor="middle" fill="#fff" font-family="Liberation Sans,sans-serif">?</text></svg>
<div class="t" style="left:1066px;top:115.6px;font-size:6.9px;color:#cfcfcf;transform:scaleX(0.7664);transform-origin:0 0;">Asset Name</div>
<div class="a" style="left:1130.6px;top:113.6px;width:33.6px;height:10.2px;background:linear-gradient(#525252,#474747);border-radius:1.5px"></div>
<div class="t" style="left:1137px;top:115.6px;font-size:6.9px;color:#cfcfcf;transform:scaleX(0.8797);transform-origin:0 0;">timeshift</div>
<div class="a" style="left:1165px;top:113.6px;width:6.4px;height:10.4px;background:#2f2f2f;border-radius:1px"></div>
<svg style="left:1166.6000000000001px;top:115.39999999999999px" width="3.2" height="6.8" viewBox="0 0 4 8"><path d="M0.4 3L2 0.8L3.6 3zM0.4 5L2 7.2L3.6 5z" fill="#c8c8c8"/></svg>
<div class="t" style="left:1117px;top:131.2px;font-size:6.9px;color:#cfcfcf;transform:scaleX(0.8082);transform-origin:0 0;">Method</div>
<div class="a" style="left:1142px;top:129px;width:35.4px;height:10.4px;background:linear-gradient(#505050,#454545);border-radius:1px;border:0.5px solid #2c2c2c"></div>
<div class="t" style="left:1148.6px;top:131px;font-size:6.9px;color:#cfcfcf;transform:scaleX(0.7825);transform-origin:0 0;">By Frame</div>
<div class="a" style="left:1178px;top:129px;width:6.4px;height:10.4px;background:#2f2f2f;border-radius:1px"></div>
<svg style="left:1179.6000000000001px;top:130.79999999999998px" width="3.2" height="6.8" viewBox="0 0 4 8"><path d="M0.4 3L2 0.8L3.6 3zM0.4 5L2 7.2L3.6 5z" fill="#c8c8c8"/></svg>
<div class="a" style="left:1073.2px;top:141.8px;width:64px;height:9px;background:linear-gradient(#5e5e5e,#525252);border-radius:1px"></div>
<div class="t" style="left:1119.8px;top:143px;font-size:6.9px;color:#dedede;transform:scaleX(0.7825);transform-origin:0 0;">Frame</div>
<div class="a" style="left:1142px;top:141.8px;width:132px;height:9px;background:#46a046;border:0.8px solid #6cc06c"></div>
<div class="t" style="left:1143.2px;top:143px;font-size:7px;color:#ffffff;transform:scaleX(0.7876);transform-origin:0 0;font-weight:bold;">$FSTART</div>
<div class="a" style="left:1142.2px;top:154.2px;width:5.8px;height:5.8px;background:#1c1c1c;"></div>
<svg style="left:1142.4px;top:153.4px" width="7" height="7" viewBox="0 0 7 7"><path d="M0.8 3.6L2.6 5.8L6.2 0.6" stroke="#fff" stroke-width="1.3" fill="none"/></svg>
<div class="t" style="left:1151.4px;top:154.2px;font-size:6.9px;color:#cfcfcf;transform:scaleX(0.7951);transform-origin:0 0;">Integer Frames</div>
<div class="t" style="left:1123.4px;top:164.6px;font-size:6.9px;color:#7a7a7a;transform:scaleX(0.7826);transform-origin:0 0;">Time</div>
<div class="a" style="left:1142px;top:164px;width:132px;height:8.6px;background:#333333;"></div>
<div class="t" style="left:1143.6px;top:165.2px;font-size:6.4px;color:#4c4c4c;transform:scaleX(0.8332);transform-origin:0 0;font-family:'Liberation Mono',monospace;">41.6667</div>
<div class="t" style="left:1119px;top:176.8px;font-size:6.9px;color:#cfcfcf;transform:scaleX(0.8125);transform-origin:0 0;">Clamp</div>
<div class="a" style="left:1142px;top:174.8px;width:47px;height:10px;background:linear-gradient(#505050,#454545);border-radius:1px;border:0.5px solid #2c2c2c"></div>
<div class="t" style="left:1148.6px;top:176.8px;font-size:6.9px;color:#cfcfcf;transform:scaleX(0.8123);transform-origin:0 0;">None</div>
<div class="a" style="left:1189.8px;top:174.8px;width:6.4px;height:10px;background:#2f2f2f;border-radius:1px"></div>
<svg style="left:1191.4px;top:176.4px" width="3.2" height="6.8" viewBox="0 0 4 8"><path d="M0.4 3L2 0.8L3.6 3zM0.4 5L2 7.2L3.6 5z" fill="#c8c8c8"/></svg>
<div class="t" style="left:1094.6px;top:188.8px;font-size:6.9px;color:#cfcfcf;transform:scaleX(0.8021);transform-origin:0 0;">Start/End Frame</div>
<div class="a" style="left:1142px;top:187.2px;width:65px;height:9.6px;background:#2f4a33;"></div>
<div class="a" style="left:1208.4px;top:187.2px;width:65.6px;height:9.6px;background:#2f4a33;"></div>
<div class="t" style="left:1143.6px;top:188.8px;font-size:6.4px;color:#46684a;transform:scaleX(0.8723);transform-origin:0 0;font-family:'Liberation Mono',monospace;">1001</div>
<div class="t" style="left:1210.4px;top:188.8px;font-size:6.4px;color:#46684a;transform:scaleX(0.8593);transform-origin:0 0;font-family:'Liberation Mono',monospace;">1150</div>
<svg style="left:1122.0px;top:86.8px" width="11" height="11" viewBox="-6 -6 12 12"><path d="M-4.6 4.6L2 -2" stroke="#eee" stroke-width="1.5"/><path d="M0.6 -4.6A3 3 0 0 1 4.6 -0.6L2.6 -0.8L1 -2.6z" fill="#eee"/><path d="M4.6 4.6L-2 -2" stroke="#ddd" stroke-width="1.1"/><path d="M-4.8 -3.4L-3.4 -4.8L-1.4 -2.4L-2.4 -1.4z" fill="#eee"/></svg>
<svg style="left:1134.5px;top:86.8px" width="11" height="11" viewBox="-6 -6 12 12"><path d="M-3 -4.4V4.4M-3 -2.6H1M-3 0.4H1M-3 3.4H1" stroke="#e8e8e8" stroke-width="0.9" fill="none"/><rect x="0.4" y="-3.8" width="3" height="2.2" fill="#eee"/><rect x="0.4" y="-0.8" width="3" height="2.2" fill="#eee"/><rect x="0.4" y="2.2" width="3" height="2.2" fill="#eee"/></svg>
<svg style="left:1146.0px;top:86.8px" width="11" height="11" viewBox="-6 -6 12 12"><rect x="-3.4" y="-4.6" width="6.8" height="9.2" fill="#f0f0f0"/><path d="M-2.2 -2.6H2.2M-2.2 -0.6H2.2M-2.2 1.4H2.2" stroke="#9a9a9a" stroke-width="0.7"/></svg>
<div class="a" style="left:1167px;top:86.2px;width:11.8px;height:11.6px;background:#4f678e;border-radius:1px;border:0.6px solid #6f8fc0"></div>
<svg style="left:1167.0px;top:86.8px" width="11" height="11" viewBox="-6 -6 12 12"><rect x="-4" y="-4.4" width="8" height="8.8" fill="#e8eef6"/><rect x="-3" y="-3.4" width="2.6" height="2.4" fill="#e05a3a"/><rect x="0.4" y="-3.4" width="2.6" height="2.4" fill="#3a7ad8"/><rect x="-3" y="0.4" width="2.6" height="2.8" fill="#58b058"/><rect x="0.4" y="0.4" width="2.6" height="2.8" fill="#e0c03a"/></svg>
<svg style="left:1179.5px;top:86.8px" width="11" height="11" viewBox="-6 -6 12 12"><rect x="-4" y="-4.4" width="8" height="8.8" fill="#4a4a4a" stroke="#ccc" stroke-width="0.7"/><rect x="-2.8" y="-3.2" width="2.2" height="2.2" fill="#ddd"/><rect x="0.6" y="-3.2" width="2.2" height="2.2" fill="#ddd"/><rect x="-2.8" y="0.6" width="2.2" height="2.2" fill="#ddd"/><rect x="0.6" y="0.6" width="2.2" height="2.2" fill="#ddd"/></svg>
<svg style="left:1199.5px;top:86.8px" width="11" height="11" viewBox="-6 -6 12 12"><rect x="-4.4" y="-4" width="8.8" height="8" fill="#f0f0f0"/><rect x="-3.4" y="-3" width="3.2" height="3.2" fill="#333"/><path d="M0.6 3L2.2 0.4L3.8 3z" fill="#555"/></svg>
<svg style="left:1211.0px;top:86.8px" width="11" height="11" viewBox="-6 -6 12 12"><path d="M-4.2 -3.6H4.2V2L1.6 4.6H-4.2z" fill="#f0d83a"/><path d="M4.2 2H1.6V4.6z" fill="#b89c1e"/><path d="M1 -5.2L5 -1.6" stroke="#3a3a3a" stroke-width="1.3"/></svg>
<svg style="left:1223.5px;top:86.8px" width="11" height="11" viewBox="-6 -6 12 12"><rect x="-4.4" y="-4" width="8.8" height="8" fill="#5a9ad8"/><path d="M-4.4 4L-1 -0.6L1.4 2L2.8 0.4L4.4 2.4V4z" fill="#3a6a3a"/><path d="M0.6 -5L4.8 -0.8" stroke="#eee" stroke-width="1.2"/></svg>
<svg style="left:1235.5px;top:86.8px" width="11" height="11" viewBox="-6 -6 12 12"><path d="M-4.4 -2.4H4.4V4H-4.4z" fill="#e8902a"/><path d="M-4.4 -4.2H4.4V-2.4H-4.4z" fill="#f4c070"/></svg>
<svg style="left:1255.5px;top:86.8px" width="11" height="11" viewBox="-6 -6 12 12"><circle cx="-1" cy="-1" r="3.4" fill="#444" stroke="#f2f2f2" stroke-width="1"/><path d="M1.6 1.6L5 5" stroke="#f2f2f2" stroke-width="1.5"/></svg>
<svg style="left:1268.5px;top:86.8px" width="11" height="11" viewBox="-6 -6 12 12"><rect x="-4.4" y="-4.4" width="8.8" height="8.8" fill="#f2f2f2"/><path d="M0 -3.4L3 0H1V3.2H-1V0H-3z" fill="#222"/></svg>
<div class="a" style="left:0px;top:671px;width:1280px;height:36px;background:#383838;"></div>
<div class="a" style="left:0px;top:671px;width:1280px;height:1.2px;background:#222222;"></div>
<div class="a" style="left:655px;top:671px;width:625px;height:1px;background:#505050;"></div>
<div class="a" style="left:115px;top:672.2px;width:1042px;height:25px;background:#303030;"></div>
<div class="a" style="left:160px;top:697px;width:951px;height:5.4px;background:#2a2a2a;"></div>
<div class="a" style="left:0px;top:671px;width:4.6px;height:36px;background:#444444;"></div>
<svg style="left:0.5px;top:703.4px" width="3" height="3"><circle cx="1.5" cy="1.5" r="1" fill="#0c0c0c"/></svg>
<div class="a" style="left:7.5px;top:676.6px;width:12.8px;height:13.299999999999955px;background:#464646;border-radius:1px;"></div>
<svg style="left:8.4px;top:677.75px" width="11" height="11" viewBox="-6 -6 12 12"><path d="M-4.6 -3.2V3.2" stroke="#f2f2f2" stroke-width="1.3"/><path d="M-0.2 -3.2V3.2L-3.8 0zM4.4 -3.2V3.2L0.6 0z" fill="#f2f2f2"/></svg>
<div class="a" style="left:21px;top:676.6px;width:13.399999999999999px;height:13.299999999999955px;background:#464646;border-radius:1px;"></div>
<svg style="left:22.2px;top:677.75px" width="11" height="11" viewBox="-6 -6 12 12"><path d="M2.6 -3.8V3.8L-3.4 0z" fill="#f2f2f2"/></svg>
<div class="a" style="left:35px;top:676.6px;width:12.600000000000001px;height:13.299999999999955px;background:#4a6388;border-radius:1px;border:1px solid #79a4e0;"></div>
<svg style="left:35.8px;top:677.75px" width="11" height="11" viewBox="-6 -6 12 12"><rect x="-3" y="-3" width="6" height="6" fill="#e6e6e6"/></svg>
<div class="a" style="left:48.4px;top:676.6px;width:12.800000000000004px;height:13.299999999999955px;background:#464646;border-radius:1px;"></div>
<svg style="left:49.3px;top:677.75px" width="11" height="11" viewBox="-6 -6 12 12"><path d="M-2.6 -3.8V3.8L3.4 0z" fill="#f2f2f2"/></svg>
<div class="a" style="left:62px;top:676.6px;width:12.700000000000003px;height:13.299999999999955px;background:#464646;border-radius:1px;"></div>
<svg style="left:62.849999999999994px;top:677.75px" width="11" height="11" viewBox="-6 -6 12 12"><path d="M4.6 -3.2V3.2" stroke="#f2f2f2" stroke-width="1.3"/><path d="M0.2 -3.2V3.2L3.8 0zM-4.4 -3.2V3.2L-0.6 0z" fill="#f2f2f2"/></svg>
<div class="a" style="left:76.5px;top:677px;width:23.5px;height:12.6px;background:#181818;border-radius:1px"></div>
<div class="t" style="left:77.8px;top:679.6px;font-size:7px;color:#e8e8e8;transform:scaleX(0.7856);transform-origin:0 0;font-family:'Liberation Mono',monospace;">1001</div>
<div class="a" style="left:100.8px;top:676.6px;width:6.200000000000003px;height:13.299999999999955px;background:#464646;border-radius:1px;"></div>
<svg style="left:98.4px;top:677.75px" width="11" height="11" viewBox="-6 -6 12 12"><path d="M1 -2.2V2.2L-2.4 0z" fill="#ddd"/><path d="M2.6 -2.2V2.2" stroke="#ddd" stroke-width="0.9"/></svg>
<div class="a" style="left:107.8px;top:676.6px;width:5.6000000000000085px;height:13.299999999999955px;background:#464646;border-radius:1px;"></div>
<svg style="left:105.1px;top:677.75px" width="11" height="11" viewBox="-6 -6 12 12"><path d="M-1 -2.2V2.2L2.4 0z" fill="#ddd"/><path d="M-2.6 -2.2V2.2" stroke="#ddd" stroke-width="0.9"/></svg>
<svg style="left:0;top:0" width="1280" height="720" viewBox="0 0 1280 720"><path d="M116 683.2H1155" stroke="#6e6e6e" stroke-width="1"/><path d="M121.50 681.8V684.6M128.43 681.8V684.6M135.36 681.8V684.6M142.29 681.8V684.6M149.22 681.8V684.6M156.15 681.8V684.6M163.08 681.8V684.6M170.01 679.6V686.8M176.94 681.8V684.6M183.87 681.8V684.6M190.80 681.8V684.6M197.73 681.8V684.6M204.66 681.8V684.6M211.59 681.8V684.6M218.52 681.8V684.6M225.45 681.8V684.6M232.38 681.8V684.6M239.31 681.8V684.6M246.24 681.8V684.6M253.17 681.8V684.6M260.10 681.8V684.6M267.03 681.8V684.6M273.96 681.8V684.6M280.89 681.8V684.6M287.82 681.8V684.6M294.75 681.8V684.6M301.68 681.8V684.6M308.61 681.8V684.6M315.54 681.8V684.6M322.47 681.8V684.6M329.40 681.8V684.6M336.33 679.6V686.8M343.26 681.8V684.6M350.19 681.8V684.6M357.12 681.8V684.6M364.05 681.8V684.6M370.98 681.8V684.6M377.91 681.8V684.6M384.84 681.8V684.6M391.77 681.8V684.6M398.70 681.8V684.6M405.63 681.8V684.6M412.56 681.8V684.6M419.49 681.8V684.6M426.42 681.8V684.6M433.35 681.8V684.6M440.28 681.8V684.6M447.21 681.8V684.6M454.14 681.8V684.6M461.07 681.8V684.6M468.00 681.8V684.6M474.93 681.8V684.6M481.86 681.8V684.6M488.79 681.8V684.6M495.72 681.8V684.6M502.65 679.6V686.8M509.58 681.8V684.6M516.51 681.8V684.6M523.44 681.8V684.6M530.37 681.8V684.6M537.30 681.8V684.6M544.23 681.8V684.6M551.16 681.8V684.6M558.09 681.8V684.6M565.02 681.8V684.6M571.95 681.8V684.6M578.88 681.8V684.6M585.81 681.8V684.6M592.74 681.8V684.6M599.67 681.8V684.6M606.60 681.8V684.6M613.53 681.8V684.6M620.46 681.8V684.6M627.39 681.8V684.6M634.32 681.8V684.6M641.25 681.8V684.6M648.18 681.8V684.6M655.11 681.8V684.6M662.04 681.8V684.6M668.97 679.6V686.8M675.90 681.8V684.6M682.83 681.8V684.6M689.76 681.8V684.6M696.69 681.8V684.6M703.62 681.8V684.6M710.55 681.8V684.6M717.48 681.8V684.6M724.41 681.8V684.6M731.34 681.8V684.6M738.27 681.8V684.6M745.20 681.8V684.6M752.13 681.8V684.6M759.06 681.8V684.6M765.99 681.8V684.6M772.92 681.8V684.6M779.85 681.8V684.6M786.78 681.8V684.6M793.71 681.8V684.6M800.64 681.8V684.6M807.57 681.8V684.6M814.50 681.8V684.6M821.43 681.8V684.6M828.36 681.8V684.6M835.29 679.6V686.8M842.22 681.8V684.6M849.15 681.8V684.6M856.08 681.8V684.6M863.01 681.8V684.6M869.94 681.8V684.6M876.87 681.8V684.6M883.80 681.8V684.6M890.73 681.8V684.6M897.66 681.8V684.6M904.59 681.8V684.6M911.52 681.8V684.6M918.45 681.8V684.6M925.38 681.8V684.6M932.31 681.8V684.6M939.24 681.8V684.6M946.17 681.8V684.6M953.10 681.8V684.6M960.03 681.8V684.6M966.96 681.8V684.6M973.89 681.8V684.6M980.82 681.8V684.6M987.75 681.8V684.6M994.68 681.8V684.6M1001.61 679.6V686.8M1008.54 681.8V684.6M1015.47 681.8V684.6M1022.40 681.8V684.6M1029.33 681.8V684.6M1036.26 681.8V684.6M1043.19 681.8V684.6M1050.12 681.8V684.6M1057.05 681.8V684.6M1063.98 681.8V684.6M1070.91 681.8V684.6M1077.84 681.8V684.6M1084.77 681.8V684.6M1091.70 681.8V684.6M1098.63 681.8V684.6M1105.56 681.8V684.6M1112.49 681.8V684.6M1119.42 681.8V684.6M1126.35 681.8V684.6M1133.28 681.8V684.6M1140.21 681.8V684.6M1147.14 681.8V684.6" stroke="#a8a8a8" stroke-width="0.9"/></svg>
<div class="t" style="left:165.10999999999999px;top:672.6px;font-size:5.6px;color:#8e8e8e;transform:scaleX(0.7866);transform-origin:0 0;">1008</div>
<div class="t" style="left:331.43px;top:672.6px;font-size:5.6px;color:#8e8e8e;transform:scaleX(0.7866);transform-origin:0 0;">1032</div>
<div class="t" style="left:497.75px;top:672.6px;font-size:5.6px;color:#8e8e8e;transform:scaleX(0.7866);transform-origin:0 0;">1056</div>
<div class="t" style="left:664.07px;top:672.6px;font-size:5.6px;color:#8e8e8e;transform:scaleX(0.7866);transform-origin:0 0;">1080</div>
<div class="t" style="left:830.39px;top:672.6px;font-size:5.6px;color:#8e8e8e;transform:scaleX(0.8138);transform-origin:0 0;">1104</div>
<div class="t" style="left:996.71px;top:672.6px;font-size:5.6px;color:#8e8e8e;transform:scaleX(0.8138);transform-origin:0 0;">1128</div>
<div class="a" style="left:116px;top:672.6px;width:15.6px;height:8.4px;background:#111;border:0.8px solid #b4b4b4;border-radius:1px"></div>
<div class="t" style="left:118px;top:674.2px;font-size:6.2px;color:#ffffff;transform:scaleX(0.8700);transform-origin:0 0;">1001</div>
<svg style="left:115.4px;top:681.6px" width="3" height="3" viewBox="0 0 3 3"><path d="M0 3L0 0.6L2.4 3z" fill="#ccc"/></svg>
<div class="a" style="left:7.8px;top:693.8px;width:12.5px;height:10.900000000000091px;background:#464646;border-radius:1px;"></div>
<svg style="left:8.55px;top:693.75px" width="11" height="11" viewBox="-6 -6 12 12"><rect x="-3.6" y="-3.6" width="5.4" height="6.6" fill="#f0f0f0"/><rect x="-1.4" y="-1.4" width="5" height="5.6" fill="#cfcfcf" stroke="#333" stroke-width="0.5"/><path d="M2 2L5 4.6L2.6 4.8z" fill="#fff"/></svg>
<div class="a" style="left:21px;top:693.8px;width:13.200000000000003px;height:10.900000000000091px;background:#464646;border-radius:1px;"></div>
<svg style="left:22.1px;top:693.75px" width="11" height="11" viewBox="-6 -6 12 12"><path d="M-4.6 -1.4H-2.6L-0.8 -3.4V3.4L-2.6 1.4H-4.6z" fill="#f0f0f0"/><ellipse cx="2" rx="2.2" ry="3.8" fill="none" stroke="#f0f0f0" stroke-width="1"/><circle cx="2" r="1" fill="#f0f0f0"/></svg>
<div class="a" style="left:34.9px;top:693.8px;width:12.5px;height:10.900000000000091px;background:#464646;border-radius:1px;"></div>
<svg style="left:35.65px;top:693.75px" width="11" height="11" viewBox="-6 -6 12 12"><path d="M-4 2.6H3A2.6 2.6 0 0 0 3 -2.6H-2" stroke="#f2f2f2" stroke-width="1.2" fill="none"/><path d="M-1.6 -4.8L-4.6 -2.6L-1.6 -0.4z" fill="#f2f2f2"/><path d="M5.6 5.6V4L4 5.6z" fill="#aaa"/></svg>
<div class="a" style="left:48.4px;top:693.8px;width:12.600000000000001px;height:10.900000000000091px;background:#464646;border-radius:1px;"></div>
<svg style="left:49.2px;top:693.75px" width="11" height="11" viewBox="-6 -6 12 12"><circle r="4" fill="none" stroke="#f2f2f2" stroke-width="1"/><circle r="2.2" fill="#f2f2f2"/><path d="M0.4 -0.8H2V0.8H0.4z" fill="#333"/></svg>
<div class="a" style="left:62px;top:693.8px;width:12.700000000000003px;height:10.900000000000091px;background:#464646;border-radius:1px;"></div>
<svg style="left:62.849999999999994px;top:693.75px" width="11" height="11" viewBox="-6 -6 12 12"><path d="M-4.6 -2V0.6M-2.6 -2V-0.4M-0.6 -2V0.6M1.4 -2V-0.4M3.4 -2V3.4" stroke="#8a8a8a" stroke-width="0.8"/><path d="M4.6 4.6L2.6 4.6" stroke="#8a8a8a" stroke-width="0.8"/></svg>
<div class="a" style="left:75.8px;top:693.8px;width:12.5px;height:10.900000000000091px;background:#464646;border-radius:1px;"></div>
<svg style="left:76.55px;top:693.75px" width="11" height="11" viewBox="-6 -6 12 12"><path d="M-4.4 1H4.4" stroke="#d8d8d8" stroke-width="1"/><circle cx="1.4" cy="1" r="1.5" fill="#eee"/></svg>
<svg style="left:91.8px;top:695.8px" width="7" height="7" viewBox="0 0 7 7"><path d="M1.2 0.6V6.4" stroke="#4e6a3e" stroke-width="1"/><path d="M6 0.8V6.2L2.2 3.5z" fill="#4e6a3e"/></svg>
<svg style="left:104.2px;top:695.8px" width="7" height="7" viewBox="0 0 7 7"><path d="M5.8 0.6V6.4" stroke="#4e6a3e" stroke-width="1"/><path d="M1 0.8V6.2L4.8 3.5z" fill="#4e6a3e"/></svg>
<div class="a" style="left:115.6px;top:694.4px;width:18.8px;height:10px;background:#191919;border-radius:1px"></div>
<div class="t" style="left:117px;top:696.2px;font-size:6.9px;color:#e8e8e8;transform:scaleX(0.8695);transform-origin:0 0;font-family:'Liberation Mono',monospace;">1001</div>
<div class="a" style="left:138.3px;top:694.4px;width:21.1px;height:10px;background:#191919;border-radius:1px"></div>
<div class="t" style="left:140px;top:696.2px;font-size:6.9px;color:#e8e8e8;transform:scaleX(0.8453);transform-origin:0 0;font-family:'Liberation Mono',monospace;">1001</div>
<div class="a" style="left:162px;top:699px;width:948px;height:1.6px;background:#bdbdbd;"></div>
<svg style="left:159.8px;top:696.2px" width="4" height="7" viewBox="0 0 4 7"><path d="M0.2 0.4V6.6L3.8 3.5z" fill="#e8e8e8"/></svg>
<svg style="left:1107.6px;top:696.2px" width="4" height="7" viewBox="0 0 4 7"><path d="M3.8 0.4V6.6L0.2 3.5z" fill="#e8e8e8"/></svg>
<div class="a" style="left:1112px;top:695px;width:20.3px;height:9.4px;background:#161616;border-radius:1px"></div>
<div class="t" style="left:1113.6px;top:696.4px;font-size:6.9px;color:#ffffff;transform:scaleX(0.8091);transform-origin:0 0;font-weight:bold;font-family:'Liberation Mono',monospace;">1150</div>
<div class="a" style="left:1134px;top:695px;width:20px;height:9.4px;background:#161616;border-radius:1px"></div>
<div class="t" style="left:1135.5px;top:696.4px;font-size:6.9px;color:#ffffff;transform:scaleX(0.8030);transform-origin:0 0;font-weight:bold;font-family:'Liberation Mono',monospace;">1150</div>
<svg style="left:1162px;top:684px" width="9" height="9" viewBox="0 0 9 9"><circle cx="5.2" cy="3.6" r="2.6" fill="none" stroke="#8a8a8a" stroke-width="0.9"/><path d="M3.4 5.4L0.8 8" stroke="#8a8a8a" stroke-width="1.1"/></svg>
<svg style="left:1177.6px;top:686.8px" width="3" height="3"><circle cx="1.5" cy="1.5" r="1" fill="#bbb"/></svg>
<div class="a" style="left:1188.6px;top:677.6px;width:9.6px;height:10px;background:#e6e6e6;border-radius:1px"></div>
<svg style="left:1188.6px;top:677.6px" width="9.6" height="10" viewBox="0 0 9.6 10"><rect x="0.4" y="0.6" width="1.6" height="2" fill="#d83a3a"/><rect x="0.4" y="3.2" width="1.6" height="2" fill="#e0a020"/><rect x="0.4" y="5.8" width="1.6" height="2" fill="#58b038"/><path d="M3 2.4L5.6 0.6L9 2.6L6.4 4.6z" fill="#222"/><path d="M3.4 5L6.2 7L9 5.2V8L6.2 9.6L3.4 8z" fill="#333"/></svg>
<div class="a" style="left:1188px;top:690.6px;width:10.6px;height:9.8px;background:#101820;border:0.8px solid #7a5a3a;border-radius:1px"></div>
<svg style="left:1188.6px;top:691.2px" width="9.6" height="8.6" viewBox="0 0 9.6 8.6"><path d="M0.6 4.6C2.4 1 6.4 1 9 3.4" stroke="#3a8ae0" stroke-width="1.2" fill="none"/><path d="M1.4 6.6C3.6 8 6.4 7.6 8.4 6" stroke="#e08a2a" stroke-width="1.2" fill="none"/></svg>
<div class="a" style="left:1201px;top:677.4px;width:76px;height:10.6px;background:linear-gradient(#505050,#464646);border-radius:1px"></div>
<div class="t" style="left:1209.8px;top:680px;font-size:6.8px;color:#dcdcdc;transform:scaleX(0.8001);transform-origin:0 0;">0 keys, 0/0 channels</div>
<svg style="left:1271px;top:681px" width="4" height="4" viewBox="0 0 4 4"><path d="M0.2 3.4L2 0.6L3.8 3.4z" fill="#a8a8a8"/></svg>
<div class="a" style="left:1201px;top:691.4px;width:69.4px;height:9.8px;background:linear-gradient(#505050,#464646);border-radius:1px"></div>
<div class="a" style="left:1271px;top:691.4px;width:6.2px;height:9.8px;background:#2f2f2f;border-radius:1px"></div>
<div class="t" style="left:1207.8px;top:693.4px;font-size:6.8px;color:#dcdcdc;transform:scaleX(0.7897);transform-origin:0 0;">Key All Channels</div>
<svg style="left:1272.6px;top:693px" width="3.2" height="6.8" viewBox="0 0 4 8"><path d="M0.4 3L2 0.8L3.6 3zM0.4 5L2 7.2L3.6 5z" fill="#c8c8c8"/></svg>
<div class="a" style="left:0px;top:706.6px;width:1280px;height:13.4px;background:#1c1c1c;"></div>
<div class="a" style="left:1199px;top:706.6px;width:81px;height:13.4px;background:#3a3a3a;"></div>
<div class="t" style="left:1.4px;top:709.8px;font-size:7px;color:#c4c4c4;transform:scaleX(0.7843);transform-origin:0 0;">Undid: Align nodes; Next: Change selection</div>
<svg style="left:1200.4px;top:708.2px" width="11" height="10" viewBox="0 0 11 10"><path d="M1 4.2C1 1.8 3 0.6 5.4 0.6C8.2 0.6 10 2 10 4.2C10 6.4 8.4 7.4 6.4 7.6L4 9.6L4.2 7.6C2.2 7.2 1 6.2 1 4.2z" fill="#e8e8e8"/><path d="M3 3.4C4 2.4 5 4.4 6 3.4S7.6 3 8 3.8M3.4 5.4C4.6 4.8 5.6 6 7 5.2" stroke="#8a8a8a" stroke-width="0.6" fill="none"/></svg>
<svg style="left:1214.4px;top:708.6px" width="9" height="9" viewBox="0 0 9 9"><path d="M1.2 3.8A3.4 3.4 0 0 1 7.4 2.6M7.8 5.2A3.4 3.4 0 0 1 1.6 6.4" stroke="#5e5e5e" stroke-width="1" fill="none"/><path d="M7.8 0.6V3H5.4zM1.2 8.4V6H3.6z" fill="#5e5e5e"/></svg>
<div class="a" style="left:1226px;top:707.8px;width:45.4px;height:11px;background:linear-gradient(#505050,#464646);border-radius:1px"></div>
<div class="t" style="left:1234px;top:710px;font-size:6.8px;color:#dcdcdc;transform:scaleX(0.8041);transform-origin:0 0;">Auto Update</div>
<div class="a" style="left:1272.4px;top:707.8px;width:6px;height:11px;background:#2f2f2f;border-radius:1px"></div>
<svg style="left:1273.8px;top:710px" width="3.2" height="6.8" viewBox="0 0 4 8"><path d="M0.4 3L2 0.8L3.6 3zM0.4 5L2 7.2L3.6 5z" fill="#c8c8c8"/></svg>
<div class="a" style="left:1230.4px;top:621.4px;width:49.6px;height:49.6px;background:#2a2a2a;"></div>
<div class="a" style="left:1231.0px;top:622.0px;width:7.4px;height:7.4px;background:#e00000;"></div>
<div class="a" style="left:1239.15px;top:622.0px;width:7.4px;height:7.4px;background:#f40000;"></div>
<div class="a" style="left:1247.3px;top:622.0px;width:7.4px;height:7.4px;background:#f04040;"></div>
<div class="a" style="left:1255.45px;top:622.0px;width:7.4px;height:7.4px;background:#f8a4ac;"></div>
<div class="a" style="left:1263.6px;top:622.0px;width:7.4px;height:7.4px;background:#f06c94;"></div>
<div class="a" style="left:1271.75px;top:622.0px;width:7.4px;height:7.4px;background:#b05074;"></div>
<div class="a" style="left:1231.0px;top:630.15px;width:7.4px;height:7.4px;background:#b46000;"></div>
<div class="a" style="left:1239.15px;top:630.15px;width:7.4px;height:7.4px;background:#c89418;"></div>
<div class="a" style="left:1247.3px;top:630.15px;width:7.4px;height:7.4px;background:#f4c444;"></div>
<div class="a" style="left:1255.45px;top:630.15px;width:7.4px;height:7.4px;background:#f8f0a0;"></div>
<div class="a" style="left:1263.6px;top:630.15px;width:7.4px;height:7.4px;background:#f8f020;"></div>
<div class="a" style="left:1271.75px;top:630.15px;width:7.4px;height:7.4px;background:#f4c400;"></div>
<div class="a" style="left:1231.0px;top:638.3px;width:7.4px;height:7.4px;background:#58a410;"></div>
<div class="a" style="left:1239.15px;top:638.3px;width:7.4px;height:7.4px;background:#90d830;"></div>
<div class="a" style="left:1247.3px;top:638.3px;width:7.4px;height:7.4px;background:#c0f0a0;"></div>
<div class="a" style="left:1255.45px;top:638.3px;width:7.4px;height:7.4px;background:#84e0c4;"></div>
<div class="a" style="left:1263.6px;top:638.3px;width:7.4px;height:7.4px;background:#24b494;"></div>
<div class="a" style="left:1271.75px;top:638.3px;width:7.4px;height:7.4px;background:#209080;"></div>
<div class="a" style="left:1231.0px;top:646.45px;width:7.4px;height:7.4px;background:#2064c4;"></div>
<div class="a" style="left:1239.15px;top:646.45px;width:7.4px;height:7.4px;background:#4494e4;"></div>
<div class="a" style="left:1247.3px;top:646.45px;width:7.4px;height:7.4px;background:#84c4f4;"></div>
<div class="a" style="left:1255.45px;top:646.45px;width:7.4px;height:7.4px;background:#a4c4f4;"></div>
<div class="a" style="left:1263.6px;top:646.45px;width:7.4px;height:7.4px;background:#8494d4;"></div>
<div class="a" style="left:1271.75px;top:646.45px;width:7.4px;height:7.4px;background:#6474b4;"></div>
<div class="a" style="left:1231.0px;top:654.6px;width:7.4px;height:7.4px;background:#6454c4;"></div>
<div class="a" style="left:1239.15px;top:654.6px;width:7.4px;height:7.4px;background:#9464e4;"></div>
<div class="a" style="left:1247.3px;top:654.6px;width:7.4px;height:7.4px;background:#b494e4;"></div>
<div class="a" style="left:1255.45px;top:654.6px;width:7.4px;height:7.4px;background:#e464d4;"></div>
<div class="a" style="left:1263.6px;top:654.6px;width:7.4px;height:7.4px;background:#b02494;"></div>
<div class="a" style="left:1271.75px;top:654.6px;width:7.4px;height:7.4px;background:#802464;"></div>
<div class="a" style="left:1231.0px;top:662.75px;width:7.4px;height:7.4px;background:#000000;"></div>
<div class="a" style="left:1239.15px;top:662.75px;width:7.4px;height:7.4px;background:#444444;"></div>
<div class="a" style="left:1247.3px;top:662.75px;width:7.4px;height:7.4px;background:#747474;"></div>
<div class="a" style="left:1255.45px;top:662.75px;width:7.4px;height:7.4px;background:#a8a8a8;"></div>
<div class="a" style="left:1263.6px;top:662.75px;width:7.4px;height:7.4px;background:#dcdcdc;"></div>
<div class="a" style="left:1271.75px;top:662.75px;width:7.4px;height:7.4px;background:#ffffff;"></div>
<div class="a" style="left:1040px;top:640px;width:240px;height:80px;overflow:hidden;opacity:0.085;color:#fff;pointer-events:none"><div class="t" style="left:90px;top:9.1px;font-size:33.5px;font-weight:bold;letter-spacing:5.6px">GNOMON</div><div class="t" style="left:90px;top:42.9px;font-size:23.7px;font-weight:bold;transform:scaleX(0.95);transform-origin:0 0">WORKSHOP</div><div class="t" style="left:75.4px;top:37.6px;font-size:13.5px;transform:rotate(-90deg);transform-origin:0 0;letter-spacing:0.6px">THE</div><svg style="left:18px;top:13px" width="58" height="51" viewBox="0 0 58 51"><path d="M44 1C30 10 22 22 27 33C19 30 9 32 2 40C12 37 22 39 29 46C22 50 12 50 6 46C16 54 36 53 44 42C50 33 40 27 38 18C37 11 40 5 44 1z" fill="#fff"/><circle cx="47" cy="22" r="4" fill="#fff"/></svg></div>
</body></html>
